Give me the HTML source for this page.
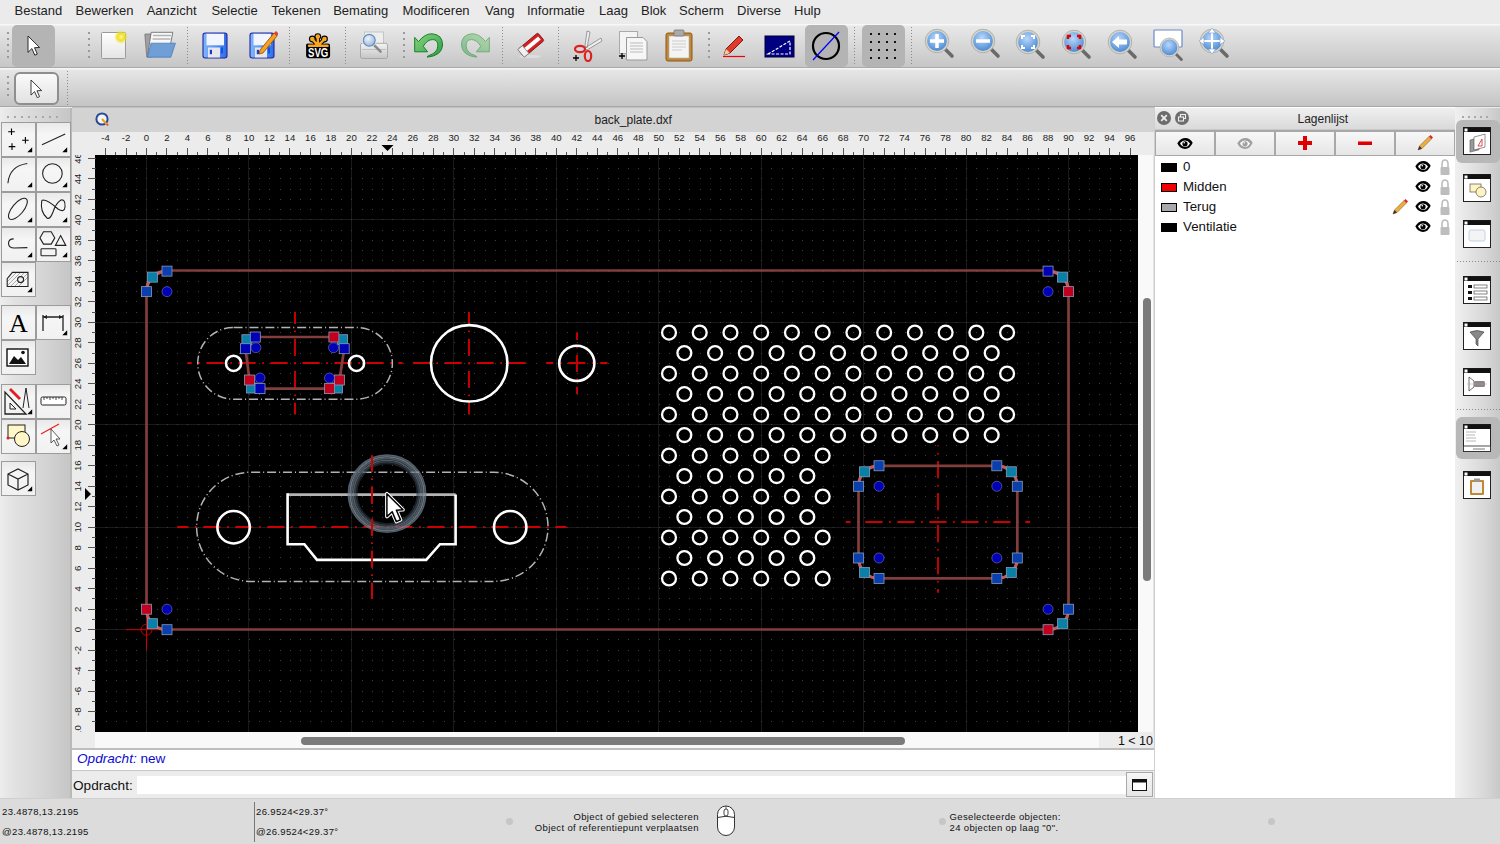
<!DOCTYPE html><html><head><meta charset="utf-8"><style>

*{box-sizing:border-box}
html,body{margin:0;padding:0}
body{width:1500px;height:844px;overflow:hidden;position:relative;background:#ececec;font-family:"Liberation Sans",sans-serif;color:#111}
.a{position:absolute}
.t{position:absolute;white-space:nowrap;line-height:1}
.menu{font-size:13px;color:#222}
.tb{position:absolute;left:0;width:1500px}
.hdl{position:absolute;width:2px;background:repeating-linear-gradient(#9a9a9a 0 2px,transparent 2px 6px)}
.sep{position:absolute;width:1px;background:repeating-linear-gradient(#8a8a8a 0 1px,transparent 1px 3px)}
.sel{position:absolute;background:#b4b4b4;border-radius:5px}
.btn{position:absolute;border:1px solid #a6a6a6;background:linear-gradient(#fafafa,#e6e6e6)}
.lb{position:absolute;top:130px;height:26px;border:1px solid #a8a8a8;border-top:2px solid #a8a8a8;background:linear-gradient(#f6f6f6,#e4e4e4)}

</style></head><body>
<div class="a" style="left:0;top:0;width:1500px;height:24px;background:#ebebeb"></div>
<div class="t menu" style="left:14.6px;top:4px">Bestand</div>
<div class="t menu" style="left:75.6px;top:4px">Bewerken</div>
<div class="t menu" style="left:146.7px;top:4px">Aanzicht</div>
<div class="t menu" style="left:211.4px;top:4px">Selectie</div>
<div class="t menu" style="left:271.6px;top:4px">Tekenen</div>
<div class="t menu" style="left:333.2px;top:4px">Bemating</div>
<div class="t menu" style="left:402.4px;top:4px">Modificeren</div>
<div class="t menu" style="left:485px;top:4px">Vang</div>
<div class="t menu" style="left:527px;top:4px">Informatie</div>
<div class="t menu" style="left:599px;top:4px">Laag</div>
<div class="t menu" style="left:641px;top:4px">Blok</div>
<div class="t menu" style="left:679px;top:4px">Scherm</div>
<div class="t menu" style="left:737px;top:4px">Diverse</div>
<div class="t menu" style="left:794px;top:4px">Hulp</div>
<div class="tb" style="top:24px;height:44px;background:linear-gradient(#f7f7f7 0,#f7f7f7 1px,#e8e8e8 2px,#c6c6c6 100%);border-bottom:1px solid #a9a9a9"></div>
<div class="tb" style="top:68px;height:39px;background:linear-gradient(#f6f6f6 0,#f6f6f6 1px,#e6e6e6 2px,#c4c4c4 100%);border-bottom:1px solid #a8a8a8"></div>
<div class="sel" style="left:12px;top:25px;width:43px;height:42px"></div>
<svg class="a" style="left:27px;top:35px" width="14" height="22" viewBox="0 0 14 22"><g transform="translate(1,1)"><path d="M0 0 L0 16.4 L3.9 12.6 L6.8 19.2 L9.3 18.1 L6.5 11.7 L11.6 11.5 Z" fill="#fff" stroke="#222" stroke-width=".95" stroke-linejoin="round"/></g></svg>
<div class="hdl" style="left:7px;top:32px;height:28px"></div>
<div class="hdl" style="left:88px;top:32px;height:28px"></div>
<svg class="a" style="left:100px;top:30px" width="28" height="31" viewBox="0 0 28 31"><defs><radialGradient id="gy"><stop offset="0" stop-color="#fff7a0"/><stop offset=".5" stop-color="#f0e020"/><stop offset="1" stop-color="#f0e020" stop-opacity="0"/></radialGradient><linearGradient id="pg" x1="0" x2="0" y1="0" y2="1"><stop offset="0" stop-color="#fff"/><stop offset="1" stop-color="#e4e4e4"/></linearGradient></defs><rect x="1.5" y="2.5" width="24" height="26" rx="1" fill="url(#pg)" stroke="#9a9a9a"/><circle cx="21" cy="7" r="7" fill="url(#gy)"/></svg>
<svg class="a" style="left:144px;top:31px" width="34" height="30" viewBox="0 0 34 30"><path d="M0.8 3.5 Q0.8 3 1.5 3 H8 V26 H2.8 Z" fill="#a0a0a0" stroke="#6a6a6a" stroke-width=".7"/><path d="M7.2 1.3 H28.8 L26.6 13 L3.8 23 Z" fill="#f8f8f8" stroke="#6e6e6e" stroke-width=".9"/><path d="M9 4.5 H27 M8.5 8 H26.5" stroke="#b4b4b4" stroke-width="1.6"/><path d="M7 12.2 H31.4 L26.8 26.2 H3.3 Z" fill="#6f9fd6" stroke="#4a7ab8" stroke-width=".8"/></svg>
<div class="sep" style="left:187px;top:27px;height:38px"></div>
<svg class="a" style="left:202px;top:32px" width="27" height="28" viewBox="0 0 27 28"><defs><linearGradient id="flg"><stop offset="0" stop-color="#7fb6fb"/><stop offset=".6" stop-color="#4f8ef4"/><stop offset="1" stop-color="#2e6ee8"/></linearGradient></defs><rect x="1" y="1" width="24" height="25" rx="2.2" fill="url(#flg)" stroke="#2424a0" stroke-width="1.1"/><rect x="4.5" y="1.8" width="17.5" height="11.5" fill="#f2f5fe"/><rect x="6" y="15.5" width="12" height="10" fill="#e6e6ec"/><rect x="7.8" y="17.8" width="2.2" height="4.4" fill="#1a3ad0"/><rect x="19" y="15.5" width="2" height="6" fill="#1a50e0"/></svg>
<svg class="a" style="left:248px;top:29px" width="30" height="31" viewBox="0 0 30 31"><g transform="translate(1,3)"><defs><linearGradient id="flg"><stop offset="0" stop-color="#7fb6fb"/><stop offset=".6" stop-color="#4f8ef4"/><stop offset="1" stop-color="#2e6ee8"/></linearGradient></defs><rect x="1" y="1" width="24" height="25" rx="2.2" fill="url(#flg)" stroke="#2424a0" stroke-width="1.1"/><rect x="4.5" y="1.8" width="17.5" height="11.5" fill="#f2f5fe"/><rect x="6" y="15.5" width="12" height="10" fill="#e6e6ec"/><rect x="7.8" y="17.8" width="2.2" height="4.4" fill="#1a3ad0"/><rect x="19" y="15.5" width="2" height="6" fill="#1a50e0"/></g><path d="M12 21 L26 4 L29 7 L15 24 L11 25 Z" fill="#f4a020" stroke="#8a4a00" stroke-width=".8"/><path d="M26 4 L28 2 L31 5 L29 7Z" fill="#e04040"/></svg>
<div class="sep" style="left:289px;top:27px;height:38px"></div>
<svg class="a" style="left:300px;top:28px" width="36" height="34" viewBox="0 0 36 34"><g stroke="#000" stroke-width="4.2" stroke-linecap="round"><path d="M18 18 L12.3 11 M18 18 L17.8 8.6 M18 18 L24.5 11 M18 18 L8 17.5 M18 18 L28 17.5"/></g><circle cx="12.3" cy="11" r="3.4" fill="#000"/><circle cx="17.8" cy="8.6" r="3.4" fill="#000"/><circle cx="24.5" cy="11" r="3.4" fill="#000"/><rect x="6.1" y="16.5" width="24" height="13.8" rx="3" fill="#000"/><g stroke="#f5a623" stroke-width="2.5" stroke-linecap="round"><path d="M18 17.8 L12.3 11 M18 17.8 L17.8 8.6 M18 17.8 L24.5 11 M9 17.8 H27.5"/></g><circle cx="12.3" cy="11" r="2.3" fill="#f5a623"/><circle cx="17.8" cy="8.6" r="2.3" fill="#f5a623"/><circle cx="24.5" cy="11" r="2.3" fill="#f5a623"/><text x="18.2" y="29" text-anchor="middle" font-family="Liberation Sans" font-weight="bold" font-size="13" fill="#fff" transform="translate(18.2 0) scale(.74 1) translate(-18.2 0)">SVG</text></svg>
<div class="sep" style="left:345px;top:27px;height:38px"></div>
<svg class="a" style="left:356px;top:28px" width="36" height="34" viewBox="0 0 36 34"><defs><linearGradient id="prg" x1="0" x2="0" y1="0" y2="1"><stop offset="0" stop-color="#f4f4f4"/><stop offset="1" stop-color="#c4c4c4"/></linearGradient><radialGradient id="lens" cx=".4" cy=".35" r=".7"><stop offset="0" stop-color="#eef4fa"/><stop offset="1" stop-color="#98b4d4"/></radialGradient></defs><rect x="8.4" y="4" width="19" height="14" fill="#eeeeee" stroke="#bcbcbc" stroke-width=".8"/><path d="M4.5 17 Q4.5 15.3 6.5 15.3 H29.5 Q31.5 15.3 31.5 17 V29 Q31.5 30.5 29.5 30.5 H6.5 Q4.5 30.5 4.5 29Z" fill="url(#prg)" stroke="#a4a4a4" stroke-width=".9"/><path d="M6 21.5 H30" stroke="#b8b8b8" stroke-width=".8"/><path d="M18 17 L24.6 23.6" stroke="#8a8a8a" stroke-width="2.6" stroke-linecap="round"/><circle cx="13.3" cy="12.3" r="6" fill="url(#lens)" stroke="#5f8cc8" stroke-width="1.3"/><circle cx="13.3" cy="12.3" r="7" fill="none" stroke="#e8e8e8" stroke-width=".8"/></svg>
<div class="hdl" style="left:403px;top:32px;height:28px"></div>
<svg class="a" style="left:408px;top:28px" width="40" height="36" viewBox="0 0 40 36"><defs><linearGradient id="ug" x1="0" y1="0" x2="1" y2="1"><stop offset="0" stop-color="#8ad47a"/><stop offset="1" stop-color="#2a9c46"/></linearGradient></defs><path d="M6.7 9.4 L10.5 13.6 Q17 5.5 24 5.8 Q34.5 6.5 34.6 17 Q34 27.5 19.4 29.2 Q19 28 20.5 27.7 Q29.5 25 29.9 18 Q30 11.5 24.6 11.6 Q19.5 11.5 15.2 18.3 L19.6 23.8 L6.7 23.8 Z" fill="url(#ug)" stroke="#15802e" stroke-width="1"/></svg>
<svg class="a" style="left:456px;top:28px" width="40" height="36" viewBox="0 0 40 36"><g opacity=".5" transform="translate(40,0) scale(-1,1)"><path d="M6.7 9.4 L10.5 13.6 Q17 5.5 24 5.8 Q34.5 6.5 34.6 17 Q34 27.5 19.4 29.2 Q19 28 20.5 27.7 Q29.5 25 29.9 18 Q30 11.5 24.6 11.6 Q19.5 11.5 15.2 18.3 L19.6 23.8 L6.7 23.8 Z" fill="url(#ug)" stroke="#15802e" stroke-width="1"/></g></svg>
<div class="sep" style="left:502px;top:27px;height:38px"></div>
<svg class="a" style="left:517px;top:31px" width="28" height="29" viewBox="0 0 28 29"><ellipse cx="13" cy="25.5" rx="11" ry="1.6" fill="#ddd"/><g transform="rotate(-40 14 14)"><rect x="1" y="9" width="26" height="10" rx="1.5" fill="#d42020" stroke="#7a1010" stroke-width=".8"/><rect x="5" y="12" width="20" height="4" fill="#fff"/><rect x="1" y="9" width="6" height="10" fill="#f0f0f0" stroke="#888" stroke-width=".8"/></g></svg>
<div class="sep" style="left:558px;top:27px;height:38px"></div>
<svg class="a" style="left:571px;top:30px" width="32" height="32" viewBox="0 0 32 32"><path d="M14 16 L16 1 L19 2 L16 18Z M14 18 L30 8 L31 11 L16 20 Z" fill="#eee" stroke="#888" stroke-width=".8"/><ellipse cx="9" cy="19" rx="5" ry="3.2" fill="none" stroke="#e02020" stroke-width="2.2"/><ellipse cx="17" cy="26" rx="3.2" ry="5" fill="none" stroke="#e02020" stroke-width="2.2"/><path d="M2 28 h6 M5 25 v6" stroke="#000" stroke-width="1.3"/></svg>
<svg class="a" style="left:617px;top:30px" width="32" height="32" viewBox="0 0 32 32"><rect x="2.5" y="1.5" width="18" height="22" fill="#f4f4f4" stroke="#aaa"/><path d="M9.5 7.5 H26 L30 11.5 V30 H9.5 Z" fill="#f6f6f6" stroke="#999"/><g stroke="#bbb"><path d="M13 13h13M13 16h13M13 19h13M13 22h13"/></g><path d="M2 26 h6 M5 23 v6" stroke="#000" stroke-width="1.3"/></svg>
<svg class="a" style="left:664px;top:29px" width="30" height="33" viewBox="0 0 30 33"><rect x="2" y="4" width="26" height="28" rx="2" fill="#c08838" stroke="#8a5a18"/><rect x="5" y="7" width="20" height="22" fill="#f4f4f4" stroke="#aaa" stroke-width=".6"/><rect x="10" y="1" width="10" height="6" rx="1" fill="#aaa" stroke="#777" stroke-width=".8"/><g stroke="#ccc"><path d="M8 12h14M8 15h14M8 18h14M8 21h10"/></g></svg>
<div class="hdl" style="left:708px;top:32px;height:28px"></div>
<svg class="a" style="left:722px;top:34px" width="24" height="24" viewBox="0 0 24 24"><path d="M2 21 L4 15 L17 2 L21 6 L8 19 Z" fill="#e03a2a" stroke="#801810" stroke-width="1"/><path d="M2 21 L4 15 L8 19Z" fill="#f0d0a0"/><path d="M1 22.5 h22" stroke="#f00000" stroke-width="1.2"/></svg>
<svg class="a" style="left:764px;top:35px" width="31" height="23" viewBox="0 0 31 23"><rect x="1" y="1" width="29" height="21" fill="#000080" stroke="#000030"/><path d="M4 19 L26 6 L26 19 Z" fill="none" stroke="#fff" stroke-width="1.2" stroke-dasharray="3 1.5"/></svg>
<div class="sel" style="left:805px;top:25px;width:43px;height:42px"></div>
<svg class="a" style="left:809px;top:29px" width="34" height="34" viewBox="0 0 34 34"><circle cx="17" cy="17" r="13" fill="none" stroke="#000" stroke-width="2.2"/><path d="M4 31 L30 3" stroke="#0000ff" stroke-width="1.2"/></svg>
<div class="sep" style="left:854px;top:27px;height:38px"></div>
<div class="sel" style="left:862px;top:25px;width:43px;height:42px"></div>
<svg class="a" style="left:868px;top:32px" width="30" height="30" viewBox="0 0 30 30"><rect x="2" y="1" width="2" height="2" fill="#111"/><rect x="2" y="9" width="2" height="2" fill="#111"/><rect x="2" y="17" width="2" height="2" fill="#111"/><rect x="2" y="25" width="2" height="2" fill="#111"/><rect x="10" y="1" width="2" height="2" fill="#111"/><rect x="10" y="9" width="2" height="2" fill="#111"/><rect x="10" y="17" width="2" height="2" fill="#111"/><rect x="10" y="25" width="2" height="2" fill="#111"/><rect x="18" y="1" width="2" height="2" fill="#111"/><rect x="18" y="9" width="2" height="2" fill="#111"/><rect x="18" y="17" width="2" height="2" fill="#111"/><rect x="18" y="25" width="2" height="2" fill="#111"/><rect x="26" y="1" width="2" height="2" fill="#111"/><rect x="26" y="9" width="2" height="2" fill="#111"/><rect x="26" y="17" width="2" height="2" fill="#111"/><rect x="26" y="25" width="2" height="2" fill="#111"/></svg>
<div class="sep" style="left:911px;top:27px;height:38px"></div>
<svg class="a" style="left:924px;top:28px" width="32" height="32" viewBox="0 0 32 32"><defs><radialGradient id="mg" cx=".45" cy=".35" r=".7"><stop offset="0" stop-color="#b8d8fa"/><stop offset="1" stop-color="#3f7fcf"/></radialGradient></defs><path d="M21.5 21.5 L28 28" stroke="#6a6a6a" stroke-width="3.6" stroke-linecap="round"/><circle cx="13" cy="13" r="10.9" fill="url(#mg)" stroke="#d4d4cc" stroke-width="2"/><circle cx="13" cy="13" r="11.8" fill="none" stroke="#9a9a90" stroke-width=".6"/><path d="M13 6v14M6 13h14" stroke="#fff" stroke-width="3.5"/></svg>
<svg class="a" style="left:970px;top:28px" width="32" height="32" viewBox="0 0 32 32"><defs><radialGradient id="mg" cx=".45" cy=".35" r=".7"><stop offset="0" stop-color="#b8d8fa"/><stop offset="1" stop-color="#3f7fcf"/></radialGradient></defs><path d="M21.5 21.5 L28 28" stroke="#6a6a6a" stroke-width="3.6" stroke-linecap="round"/><circle cx="13" cy="13" r="10.9" fill="url(#mg)" stroke="#d4d4cc" stroke-width="2"/><circle cx="13" cy="13" r="11.8" fill="none" stroke="#9a9a90" stroke-width=".6"/><path d="M6 13h14" stroke="#fff" stroke-width="3.5"/></svg>
<svg class="a" style="left:1015px;top:29px" width="32" height="32" viewBox="0 0 32 32"><defs><radialGradient id="mg" cx=".45" cy=".35" r=".7"><stop offset="0" stop-color="#b8d8fa"/><stop offset="1" stop-color="#3f7fcf"/></radialGradient></defs><path d="M21.5 21.5 L28 28" stroke="#6a6a6a" stroke-width="3.6" stroke-linecap="round"/><circle cx="13" cy="13" r="10.9" fill="url(#mg)" stroke="#d4d4cc" stroke-width="2"/><circle cx="13" cy="13" r="11.8" fill="none" stroke="#9a9a90" stroke-width=".6"/><path d="M7 10V7h3M16 7h3v3M19 16v3h-3M10 19H7v-3" fill="none" stroke="#fff" stroke-width="2"/></svg>
<svg class="a" style="left:1061px;top:29px" width="32" height="32" viewBox="0 0 32 32"><defs><radialGradient id="mg" cx=".45" cy=".35" r=".7"><stop offset="0" stop-color="#b8d8fa"/><stop offset="1" stop-color="#3f7fcf"/></radialGradient></defs><path d="M21.5 21.5 L28 28" stroke="#6a6a6a" stroke-width="3.6" stroke-linecap="round"/><circle cx="13" cy="13" r="10.9" fill="url(#mg)" stroke="#d4d4cc" stroke-width="2"/><circle cx="13" cy="13" r="11.8" fill="none" stroke="#9a9a90" stroke-width=".6"/><path d="M7 10V7h3M16 7h3v3M19 16v3h-3M10 19H7v-3" fill="none" stroke="#e00000" stroke-width="2.5"/></svg>
<svg class="a" style="left:1107px;top:29px" width="32" height="32" viewBox="0 0 32 32"><defs><radialGradient id="mg" cx=".45" cy=".35" r=".7"><stop offset="0" stop-color="#b8d8fa"/><stop offset="1" stop-color="#3f7fcf"/></radialGradient></defs><path d="M21.5 21.5 L28 28" stroke="#6a6a6a" stroke-width="3.6" stroke-linecap="round"/><circle cx="13" cy="13" r="10.9" fill="url(#mg)" stroke="#d4d4cc" stroke-width="2"/><circle cx="13" cy="13" r="11.8" fill="none" stroke="#9a9a90" stroke-width=".6"/><path d="M5 13 L12 7 V10.5 H20 V15.5 H12 V19 Z" fill="#fff"/></svg>
<svg class="a" style="left:1153px;top:29px" width="32" height="33" viewBox="0 0 32 33"><rect x="1" y="1" width="28" height="17" rx="1" fill="#fff" stroke="#6a8ac8" stroke-width="1.2"/><g transform="translate(6,8) scale(.8)"><defs><radialGradient id="mg2" cx=".45" cy=".35" r=".7"><stop offset="0" stop-color="#b8d8fa"/><stop offset="1" stop-color="#3f7fcf"/></radialGradient></defs><path d="M21.5 21.5 L28 28" stroke="#6a6a6a" stroke-width="3.6" stroke-linecap="round"/><circle cx="13" cy="13" r="10.9" fill="url(#mg2)" stroke="#d4d4cc" stroke-width="2"/><circle cx="13" cy="13" r="11.8" fill="none" stroke="#9a9a90" stroke-width=".6"/></g></svg>
<svg class="a" style="left:1199px;top:28px" width="33" height="33" viewBox="0 0 33 33"><defs><radialGradient id="mg" cx=".45" cy=".35" r=".7"><stop offset="0" stop-color="#b8d8fa"/><stop offset="1" stop-color="#3f7fcf"/></radialGradient></defs><path d="M21.5 21.5 L28 28" stroke="#6a6a6a" stroke-width="3.6" stroke-linecap="round"/><circle cx="13" cy="13" r="10.9" fill="url(#mg)" stroke="#d4d4cc" stroke-width="2"/><circle cx="13" cy="13" r="11.8" fill="none" stroke="#9a9a90" stroke-width=".6"/><path d="M13 1 V25 M1 13 H25" stroke="#fff" stroke-width="2"/><path d="M13 0 L9.5 5 H16.5Z M13 26 L9.5 21 H16.5Z M0 13 L5 9.5 V16.5Z M26 13 L21 9.5 V16.5Z" fill="#fff" stroke="#7aa0d8" stroke-width=".6"/></svg>
<div class="hdl" style="left:7px;top:76px;height:22px"></div>
<div class="a" style="left:14px;top:72px;width:45px;height:33px;border:2px solid #8e8e8e;border-radius:6px;background:linear-gradient(#fafafa,#e2e2e2)"></div>
<svg class="a" style="left:30px;top:79px" width="14" height="22" viewBox="0 0 14 22"><g transform="translate(1,1) scale(.92)"><path d="M0 0 L0 16.4 L3.9 12.6 L6.8 19.2 L9.3 18.1 L6.5 11.7 L11.6 11.5 Z" fill="#fff" stroke="#222" stroke-width=".95" stroke-linejoin="round"/></g></svg>
<div class="sep" style="left:67px;top:71px;height:34px"></div>
<div class="a" style="left:0;top:108px;width:72px;height:690px;background:linear-gradient(90deg,#ededed 0,#e2e2e2 20%,#d2d2d2 70%,#c6c6c6 100%);border-right:2px solid #b9b9b9"></div>
<div class="a" style="left:7px;top:116px;width:56px;height:2px;background:repeating-linear-gradient(90deg,#a8a8a8 0 2px,transparent 2px 7px)"></div>
<div class="btn" style="left:1px;top:122px;width:35px;height:35px;border:1.4px solid #9c9c9c;background:linear-gradient(#e9e9e9 0,#f6f6f6 35%,#f1f1f1 100%)"></div><svg class="a" style="left:1px;top:122px" width="35" height="35" viewBox="0 0 35 35"><path d="M7.2 9.8h6.6M10.5 6.5v6.6M21.1 18.3h6.6M24.4 15v6.6M7.7 24.6h6.6M11 21.3v6.6" stroke="#000" stroke-width="1.1"/><path d="M31.2 25.3 L31.2 30.2 L26.3 30.2Z" fill="#000"/></svg>
<div class="btn" style="left:36px;top:122px;width:35px;height:35px;border:1.4px solid #9c9c9c;background:linear-gradient(#e9e9e9 0,#f6f6f6 35%,#f1f1f1 100%)"></div><svg class="a" style="left:36px;top:122px" width="35" height="35" viewBox="0 0 35 35"><path d="M6 22.8 L29.2 11.9" stroke="#222" fill="none" stroke-width="1.1"/><path d="M31.2 25.3 L31.2 30.2 L26.3 30.2Z" fill="#000"/></svg>
<div class="btn" style="left:1px;top:157px;width:35px;height:35px;border:1.4px solid #9c9c9c;background:linear-gradient(#e9e9e9 0,#f6f6f6 35%,#f1f1f1 100%)"></div><svg class="a" style="left:1px;top:157px" width="35" height="35" viewBox="0 0 35 35"><path d="M6.9 26.2 Q8.5 9 26.3 6.5" stroke="#222" fill="none" stroke-width="1.1"/><path d="M31.2 25.3 L31.2 30.2 L26.3 30.2Z" fill="#000"/></svg>
<div class="btn" style="left:36px;top:157px;width:35px;height:35px;border:1.4px solid #9c9c9c;background:linear-gradient(#e9e9e9 0,#f6f6f6 35%,#f1f1f1 100%)"></div><svg class="a" style="left:36px;top:157px" width="35" height="35" viewBox="0 0 35 35"><circle cx="16.4" cy="16.5" r="9.8" stroke="#222" fill="none" stroke-width="1.1"/><path d="M31.2 25.3 L31.2 30.2 L26.3 30.2Z" fill="#000"/></svg>
<div class="btn" style="left:1px;top:192px;width:35px;height:35px;border:1.4px solid #9c9c9c;background:linear-gradient(#e9e9e9 0,#f6f6f6 35%,#f1f1f1 100%)"></div><svg class="a" style="left:1px;top:192px" width="35" height="35" viewBox="0 0 35 35"><ellipse cx="16.9" cy="16.9" rx="13" ry="5.6" transform="rotate(-50 16.9 16.9)" stroke="#222" fill="none" stroke-width="1.1"/><path d="M31.2 25.3 L31.2 30.2 L26.3 30.2Z" fill="#000"/></svg>
<div class="btn" style="left:36px;top:192px;width:35px;height:35px;border:1.4px solid #9c9c9c;background:linear-gradient(#e9e9e9 0,#f6f6f6 35%,#f1f1f1 100%)"></div><svg class="a" style="left:36px;top:192px" width="35" height="35" viewBox="0 0 35 35"><path d="M5.7 9 Q4 20 11 26 Q14 28 17 20 Q20 11 25 8 Q29.5 7 29 15 Q28.5 21 22 17 Q12 8 7 8 Q5.8 8.2 5.7 9Z" stroke="#222" fill="none" stroke-width="1.1"/><path d="M31.2 25.3 L31.2 30.2 L26.3 30.2Z" fill="#000"/></svg>
<div class="btn" style="left:1px;top:227px;width:35px;height:35px;border:1.4px solid #9c9c9c;background:linear-gradient(#e9e9e9 0,#f6f6f6 35%,#f1f1f1 100%)"></div><svg class="a" style="left:1px;top:227px" width="35" height="35" viewBox="0 0 35 35"><path d="M12.7 11.9 Q7.5 12 7.5 16.5 Q7.8 21 13.3 21 L26.4 20.6" stroke="#222" fill="none" stroke-width="1.1"/><path d="M31.2 25.3 L31.2 30.2 L26.3 30.2Z" fill="#000"/></svg>
<div class="btn" style="left:36px;top:227px;width:35px;height:35px;border:1.4px solid #9c9c9c;background:linear-gradient(#e9e9e9 0,#f6f6f6 35%,#f1f1f1 100%)"></div><svg class="a" style="left:36px;top:227px" width="35" height="35" viewBox="0 0 35 35"><path d="M7.5 4.7 H15.2 L18.8 10.9 L15.2 17.1 H7.5 L3.9 10.9Z" stroke="#222" fill="none" stroke-width="1.1"/><path d="M24.6 8.6 L29.8 18.4 H19.4Z" stroke="#222" fill="none" stroke-width="1.1"/><rect x="5" y="21.7" width="15" height="7.1" rx=".8" stroke="#222" fill="none" stroke-width="1.1"/><path d="M31.2 25.3 L31.2 30.2 L26.3 30.2Z" fill="#000"/></svg>
<div class="btn" style="left:1px;top:262px;width:35px;height:35px;border:1.4px solid #9c9c9c;background:linear-gradient(#e9e9e9 0,#f6f6f6 35%,#f1f1f1 100%)"></div><svg class="a" style="left:1px;top:262px" width="35" height="35" viewBox="0 0 35 35"><defs><clipPath id="hc"><path d="M11.4 10.4 H27 V24.5 H6.2 V16.7Z"/></clipPath></defs><g clip-path="url(#hc)" stroke="#777" stroke-width=".6"><path d="M0 30 L24 6 M4 30 L28 6 M8 30 L32 6 M12 30 L36 6 M-4 30 L20 6 M-8 30 L16 6"/></g><path d="M11.4 10.4 H27 V24.5 H6.2 V16.7Z" stroke="#222" fill="none" stroke-width="1.1"/><circle cx="19.6" cy="17.6" r="3" fill="#f2f2f2" stroke="#222" stroke-width="1.1"/><path d="M31.2 25.3 L31.2 30.2 L26.3 30.2Z" fill="#000"/></svg>
<div class="btn" style="left:1px;top:305px;width:35px;height:35px;border:1.4px solid #9c9c9c;background:linear-gradient(#e9e9e9 0,#f6f6f6 35%,#f1f1f1 100%)"></div><svg class="a" style="left:1px;top:305px" width="35" height="35" viewBox="0 0 35 35"><text x="17.5" y="27" text-anchor="middle" font-family="Liberation Serif" font-size="26" fill="#000">A</text></svg>
<div class="btn" style="left:36px;top:305px;width:35px;height:35px;border:1.4px solid #9c9c9c;background:linear-gradient(#e9e9e9 0,#f6f6f6 35%,#f1f1f1 100%)"></div><svg class="a" style="left:36px;top:305px" width="35" height="35" viewBox="0 0 35 35"><path d="M7 10 V26 M27 10 V26 M7 12 H27" stroke="#222" stroke-width="1.3"/><path d="M7 12 L11 10 V14Z M27 12 L23 10 V14Z" fill="#222"/><path d="M31.2 25.3 L31.2 30.2 L26.3 30.2Z" fill="#000"/></svg>
<div class="btn" style="left:1px;top:340px;width:35px;height:35px;border:1.4px solid #9c9c9c;background:linear-gradient(#e9e9e9 0,#f6f6f6 35%,#f1f1f1 100%)"></div><svg class="a" style="left:1px;top:340px" width="35" height="35" viewBox="0 0 35 35"><rect x="6" y="9" width="21" height="17" fill="#fff" stroke="#111" stroke-width="1.4"/><path d="M8 24 L13 16 L17 20 L20 17 L25 24Z" fill="#111"/><circle cx="22" cy="12.5" r="1.8" fill="#111"/></svg>
<div class="btn" style="left:1px;top:384px;width:35px;height:35px;border:1.4px solid #9c9c9c;background:linear-gradient(#e9e9e9 0,#f6f6f6 35%,#f1f1f1 100%)"></div><svg class="a" style="left:1px;top:384px" width="35" height="35" viewBox="0 0 35 35"><path d="M4 30 L4 8 L25 30Z" fill="none" stroke="#222" stroke-width="1.3"/><path d="M9 25 L9 19 L15 25Z" fill="none" stroke="#222" stroke-width="1"/><path d="M10 4 L20 14 L18 16 L8 6Z" fill="#e02020"/><path d="M25 4 L22 24 M25 4 L28 24" stroke="#222" stroke-width="1"/><path d="M31.2 25.3 L31.2 30.2 L26.3 30.2Z" fill="#000"/></svg>
<div class="btn" style="left:36px;top:384px;width:35px;height:35px;border:1.4px solid #9c9c9c;background:linear-gradient(#e9e9e9 0,#f6f6f6 35%,#f1f1f1 100%)"></div><svg class="a" style="left:36px;top:384px" width="35" height="35" viewBox="0 0 35 35"><rect x="5" y="13" width="25" height="8" rx="1.5" fill="#fff" stroke="#222" stroke-width="1"/><path d="M8 13v3M11 13v2M14 13v3M17 13v2M20 13v3M23 13v2M26 13v3" stroke="#222" stroke-width=".8"/></svg>
<div class="btn" style="left:1px;top:419px;width:35px;height:35px;border:1.4px solid #9c9c9c;background:linear-gradient(#e9e9e9 0,#f6f6f6 35%,#f1f1f1 100%)"></div><svg class="a" style="left:1px;top:419px" width="35" height="35" viewBox="0 0 35 35"><rect x="7" y="6" width="17" height="13" fill="#fff7c8" stroke="#222" stroke-width="1"/><circle cx="21" cy="20" r="7.5" fill="#fff7c8" stroke="#222" stroke-width="1"/><circle cx="7" cy="19" r="1.5" fill="#e02020"/></svg>
<div class="btn" style="left:36px;top:419px;width:35px;height:35px;border:1.4px solid #9c9c9c;background:linear-gradient(#e9e9e9 0,#f6f6f6 35%,#f1f1f1 100%)"></div><svg class="a" style="left:36px;top:419px" width="35" height="35" viewBox="0 0 35 35"><path d="M5 15 L23 5" stroke="#f02020" stroke-width="1.3"/><path d="M15 10 L15 24 L18 21 L21 27 L23 26 L20 20 L24 20Z" fill="#fff" stroke="#333" stroke-width=".8"/><path d="M31.2 25.3 L31.2 30.2 L26.3 30.2Z" fill="#000"/></svg>
<div class="btn" style="left:1px;top:461px;width:35px;height:35px;border:1.4px solid #9c9c9c;background:linear-gradient(#e9e9e9 0,#f6f6f6 35%,#f1f1f1 100%)"></div><svg class="a" style="left:1px;top:461px" width="35" height="35" viewBox="0 0 35 35"><path d="M7 13 L17 8 L27 13 L27 24 L17 29 L7 24Z M7 13 L17 18 L27 13 M17 18 V29" fill="none" stroke="#222" stroke-width="1.2"/><path d="M31.2 25.3 L31.2 30.2 L26.3 30.2Z" fill="#000"/></svg>
<div class="a" style="left:72px;top:107px;width:1083px;height:1px;background:#c0c0c0"></div>
<div class="a" style="left:72px;top:108px;width:1082px;height:24px;background:#d3d3d3"></div>
<svg class="a" style="left:95px;top:112px" width="14" height="14" viewBox="0 0 14 14"><circle cx="7" cy="7" r="5.6" fill="#f4f4f4" stroke="#2a4a98" stroke-width="2"/><path d="M7 7 L12 12.5" stroke="#e8a020" stroke-width="2"/><circle cx="12.5" cy="12.8" r="1" fill="#e04040"/></svg>
<div class="t" style="left:594.5px;top:114px;font-size:12px;color:#222">back_plate.dxf</div>
<div class="a" style="left:72px;top:132px;width:1082px;height:23px;background:#ececec"></div>
<div class="a" style="left:72px;top:155px;width:23px;height:593px;background:#ececec"></div>
<svg class="a" style="left:0;top:0" width="1500" height="844"><path d="M105.5 148v7M115.5 152v3M126.5 148v7M136.5 152v3M146.5 148v7M156.5 152v3M166.5 148v7M177.5 152v3M187.5 148v7M197.5 152v3M207.5 148v7M218.5 152v3M228.5 148v7M238.5 152v3M248.5 148v7M259.5 152v3M269.5 148v7M279.5 152v3M289.5 148v7M300.5 152v3M310.5 148v7M320.5 152v3M330.5 148v7M341.5 152v3M351.5 148v7M361.5 152v3M371.5 148v7M382.5 152v3M392.5 148v7M402.5 152v3M412.5 148v7M423.5 152v3M433.5 148v7M443.5 152v3M453.5 148v7M464.5 152v3M474.5 148v7M484.5 152v3M494.5 148v7M505.5 152v3M515.5 148v7M525.5 152v3M535.5 148v7M546.5 152v3M556.5 148v7M566.5 152v3M576.5 148v7M587.5 152v3M597.5 148v7M607.5 152v3M617.5 148v7M628.5 152v3M638.5 148v7M648.5 152v3M658.5 148v7M668.5 152v3M679.5 148v7M689.5 152v3M699.5 148v7M709.5 152v3M720.5 148v7M730.5 152v3M740.5 148v7M750.5 152v3M761.5 148v7M771.5 152v3M781.5 148v7M791.5 152v3M802.5 148v7M812.5 152v3M822.5 148v7M832.5 152v3M843.5 148v7M853.5 152v3M863.5 148v7M873.5 152v3M884.5 148v7M894.5 152v3M904.5 148v7M914.5 152v3M925.5 148v7M935.5 152v3M945.5 148v7M955.5 152v3M966.5 148v7M976.5 152v3M986.5 148v7M996.5 152v3M1007.5 148v7M1017.5 152v3M1027.5 148v7M1037.5 152v3M1048.5 148v7M1058.5 152v3M1068.5 148v7M1078.5 152v3M1089.5 148v7M1099.5 152v3M1109.5 148v7M1119.5 152v3M1130.5 148v7M92 721.5h3M88 711.5h7M92 701.5h3M88 691.5h7M92 680.5h3M88 670.5h7M92 660.5h3M88 650.5h7M92 639.5h3M88 629.5h7M92 619.5h3M88 609.5h7M92 598.5h3M88 588.5h7M92 578.5h3M88 568.5h7M92 557.5h3M88 547.5h7M92 537.5h3M88 527.5h7M92 517.5h3M88 506.5h7M92 496.5h3M88 486.5h7M92 476.5h3M88 465.5h7M92 455.5h3M88 445.5h7M92 435.5h3M88 424.5h7M92 414.5h3M88 404.5h7M92 394.5h3M88 383.5h7M92 373.5h3M88 363.5h7M92 353.5h3M88 342.5h7M92 332.5h3M88 322.5h7M92 312.5h3M88 301.5h7M92 291.5h3M88 281.5h7M92 271.5h3M88 260.5h7M92 250.5h3M88 240.5h7M92 230.5h3M88 219.5h7M92 209.5h3M88 199.5h7M92 189.5h3M88 178.5h7M92 168.5h3M88 158.5h7" stroke="#555" stroke-width="1"/>
<g font-family="Liberation Sans" font-size="9.6" fill="#222"><text x="105.52" y="141" text-anchor="middle">-4</text><text x="126.01" y="141" text-anchor="middle">-2</text><text x="146.5" y="141" text-anchor="middle">0</text><text x="166.99" y="141" text-anchor="middle">2</text><text x="187.48" y="141" text-anchor="middle">4</text><text x="207.97" y="141" text-anchor="middle">6</text><text x="228.46" y="141" text-anchor="middle">8</text><text x="248.95" y="141" text-anchor="middle">10</text><text x="269.44" y="141" text-anchor="middle">12</text><text x="289.93" y="141" text-anchor="middle">14</text><text x="310.42" y="141" text-anchor="middle">16</text><text x="330.91" y="141" text-anchor="middle">18</text><text x="351.4" y="141" text-anchor="middle">20</text><text x="371.89" y="141" text-anchor="middle">22</text><text x="392.38" y="141" text-anchor="middle">24</text><text x="412.87" y="141" text-anchor="middle">26</text><text x="433.36" y="141" text-anchor="middle">28</text><text x="453.85" y="141" text-anchor="middle">30</text><text x="474.34" y="141" text-anchor="middle">32</text><text x="494.83" y="141" text-anchor="middle">34</text><text x="515.32" y="141" text-anchor="middle">36</text><text x="535.81" y="141" text-anchor="middle">38</text><text x="556.3" y="141" text-anchor="middle">40</text><text x="576.79" y="141" text-anchor="middle">42</text><text x="597.28" y="141" text-anchor="middle">44</text><text x="617.77" y="141" text-anchor="middle">46</text><text x="638.26" y="141" text-anchor="middle">48</text><text x="658.75" y="141" text-anchor="middle">50</text><text x="679.24" y="141" text-anchor="middle">52</text><text x="699.73" y="141" text-anchor="middle">54</text><text x="720.22" y="141" text-anchor="middle">56</text><text x="740.71" y="141" text-anchor="middle">58</text><text x="761.2" y="141" text-anchor="middle">60</text><text x="781.69" y="141" text-anchor="middle">62</text><text x="802.18" y="141" text-anchor="middle">64</text><text x="822.67" y="141" text-anchor="middle">66</text><text x="843.16" y="141" text-anchor="middle">68</text><text x="863.65" y="141" text-anchor="middle">70</text><text x="884.14" y="141" text-anchor="middle">72</text><text x="904.63" y="141" text-anchor="middle">74</text><text x="925.12" y="141" text-anchor="middle">76</text><text x="945.61" y="141" text-anchor="middle">78</text><text x="966.1" y="141" text-anchor="middle">80</text><text x="986.59" y="141" text-anchor="middle">82</text><text x="1007.08" y="141" text-anchor="middle">84</text><text x="1027.57" y="141" text-anchor="middle">86</text><text x="1048.06" y="141" text-anchor="middle">88</text><text x="1068.55" y="141" text-anchor="middle">90</text><text x="1089.04" y="141" text-anchor="middle">92</text><text x="1109.53" y="141" text-anchor="middle">94</text><text x="1130.02" y="141" text-anchor="middle">96</text><text transform="translate(80.6 732.15) rotate(-90)" x="0" y="0" text-anchor="middle">-10</text><text transform="translate(80.6 711.66) rotate(-90)" x="0" y="0" text-anchor="middle">-8</text><text transform="translate(80.6 691.17) rotate(-90)" x="0" y="0" text-anchor="middle">-6</text><text transform="translate(80.6 670.68) rotate(-90)" x="0" y="0" text-anchor="middle">-4</text><text transform="translate(80.6 650.19) rotate(-90)" x="0" y="0" text-anchor="middle">-2</text><text transform="translate(80.6 629.7) rotate(-90)" x="0" y="0" text-anchor="middle">0</text><text transform="translate(80.6 609.21) rotate(-90)" x="0" y="0" text-anchor="middle">2</text><text transform="translate(80.6 588.72) rotate(-90)" x="0" y="0" text-anchor="middle">4</text><text transform="translate(80.6 568.23) rotate(-90)" x="0" y="0" text-anchor="middle">6</text><text transform="translate(80.6 547.74) rotate(-90)" x="0" y="0" text-anchor="middle">8</text><text transform="translate(80.6 527.25) rotate(-90)" x="0" y="0" text-anchor="middle">10</text><text transform="translate(80.6 506.76) rotate(-90)" x="0" y="0" text-anchor="middle">12</text><text transform="translate(80.6 486.27) rotate(-90)" x="0" y="0" text-anchor="middle">14</text><text transform="translate(80.6 465.78) rotate(-90)" x="0" y="0" text-anchor="middle">16</text><text transform="translate(80.6 445.29) rotate(-90)" x="0" y="0" text-anchor="middle">18</text><text transform="translate(80.6 424.8) rotate(-90)" x="0" y="0" text-anchor="middle">20</text><text transform="translate(80.6 404.31) rotate(-90)" x="0" y="0" text-anchor="middle">22</text><text transform="translate(80.6 383.82) rotate(-90)" x="0" y="0" text-anchor="middle">24</text><text transform="translate(80.6 363.33) rotate(-90)" x="0" y="0" text-anchor="middle">26</text><text transform="translate(80.6 342.84) rotate(-90)" x="0" y="0" text-anchor="middle">28</text><text transform="translate(80.6 322.35) rotate(-90)" x="0" y="0" text-anchor="middle">30</text><text transform="translate(80.6 301.86) rotate(-90)" x="0" y="0" text-anchor="middle">32</text><text transform="translate(80.6 281.37) rotate(-90)" x="0" y="0" text-anchor="middle">34</text><text transform="translate(80.6 260.88) rotate(-90)" x="0" y="0" text-anchor="middle">36</text><text transform="translate(80.6 240.39) rotate(-90)" x="0" y="0" text-anchor="middle">38</text><text transform="translate(80.6 219.9) rotate(-90)" x="0" y="0" text-anchor="middle">40</text><text transform="translate(80.6 199.41) rotate(-90)" x="0" y="0" text-anchor="middle">42</text><text transform="translate(80.6 178.92) rotate(-90)" x="0" y="0" text-anchor="middle">44</text><text transform="translate(80.6 158.43) rotate(-90)" x="0" y="0" text-anchor="middle">46</text></g>
<path d="M381.5 145 L393.5 145 L387.5 151Z M85 488 L85 500 L91 494Z" fill="#000"/>
</svg>
<div class="a" style="left:72px;top:132px;width:23px;height:23px;background:#ececec"></div>
<div class="a" style="left:72px;top:732px;width:23px;height:16px;background:#ececec"></div>
<svg style="position:absolute;left:95px;top:155px" width="1043" height="577" viewBox="95 155 1043 577">
<rect x="95" y="155" width="1043" height="577" fill="#000"/>
<line x1="146.5" y1="155" x2="146.5" y2="732" stroke="#1a1a1a" stroke-width="1"/>
<line x1="248.5" y1="155" x2="248.5" y2="732" stroke="#1a1a1a" stroke-width="1"/>
<line x1="351.5" y1="155" x2="351.5" y2="732" stroke="#1a1a1a" stroke-width="1"/>
<line x1="453.5" y1="155" x2="453.5" y2="732" stroke="#1a1a1a" stroke-width="1"/>
<line x1="556.5" y1="155" x2="556.5" y2="732" stroke="#1a1a1a" stroke-width="1"/>
<line x1="658.5" y1="155" x2="658.5" y2="732" stroke="#1a1a1a" stroke-width="1"/>
<line x1="761.5" y1="155" x2="761.5" y2="732" stroke="#1a1a1a" stroke-width="1"/>
<line x1="863.5" y1="155" x2="863.5" y2="732" stroke="#1a1a1a" stroke-width="1"/>
<line x1="966.5" y1="155" x2="966.5" y2="732" stroke="#1a1a1a" stroke-width="1"/>
<line x1="1068.5" y1="155" x2="1068.5" y2="732" stroke="#1a1a1a" stroke-width="1"/>
<line x1="95" y1="629.5" x2="1138" y2="629.5" stroke="#1a1a1a" stroke-width="1"/>
<line x1="95" y1="527.5" x2="1138" y2="527.5" stroke="#1a1a1a" stroke-width="1"/>
<line x1="95" y1="424.5" x2="1138" y2="424.5" stroke="#1a1a1a" stroke-width="1"/>
<line x1="95" y1="322.5" x2="1138" y2="322.5" stroke="#1a1a1a" stroke-width="1"/>
<line x1="95" y1="219.5" x2="1138" y2="219.5" stroke="#1a1a1a" stroke-width="1"/>
<path d="M95 721.5h1m10 0h1m9 0h1m9 0h1m9 0h1m9 0h1m10 0h1m9 0h1m9 0h1m9 0h1m10 0h1m9 0h1m9 0h1m9 0h1m10 0h1m9 0h1m9 0h1m9 0h1m10 0h1m9 0h1m9 0h1m9 0h1m10 0h1m9 0h1m9 0h1m9 0h1m10 0h1m9 0h1m9 0h1m9 0h1m10 0h1m9 0h1m9 0h1m9 0h1m10 0h1m9 0h1m9 0h1m9 0h1m10 0h1m9 0h1m9 0h1m9 0h1m10 0h1m9 0h1m9 0h1m9 0h1m10 0h1m9 0h1m9 0h1m9 0h1m10 0h1m9 0h1m9 0h1m9 0h1m10 0h1m9 0h1m9 0h1m9 0h1m9 0h1m10 0h1m9 0h1m9 0h1m9 0h1m10 0h1m9 0h1m9 0h1m9 0h1m10 0h1m9 0h1m9 0h1m9 0h1m10 0h1m9 0h1m9 0h1m9 0h1m10 0h1m9 0h1m9 0h1m9 0h1m10 0h1m9 0h1m9 0h1m9 0h1m10 0h1m9 0h1m9 0h1m9 0h1m10 0h1m9 0h1m9 0h1m9 0h1m10 0h1m9 0h1m9 0h1m9 0h1m10 0h1m9 0h1m9 0h1m9 0h1m10 0h1m9 0h1m9 0h1M95 711.5h1m10 0h1m9 0h1m9 0h1m9 0h1m9 0h1m10 0h1m9 0h1m9 0h1m9 0h1m10 0h1m9 0h1m9 0h1m9 0h1m10 0h1m9 0h1m9 0h1m9 0h1m10 0h1m9 0h1m9 0h1m9 0h1m10 0h1m9 0h1m9 0h1m9 0h1m10 0h1m9 0h1m9 0h1m9 0h1m10 0h1m9 0h1m9 0h1m9 0h1m10 0h1m9 0h1m9 0h1m9 0h1m10 0h1m9 0h1m9 0h1m9 0h1m10 0h1m9 0h1m9 0h1m9 0h1m10 0h1m9 0h1m9 0h1m9 0h1m10 0h1m9 0h1m9 0h1m9 0h1m10 0h1m9 0h1m9 0h1m9 0h1m9 0h1m10 0h1m9 0h1m9 0h1m9 0h1m10 0h1m9 0h1m9 0h1m9 0h1m10 0h1m9 0h1m9 0h1m9 0h1m10 0h1m9 0h1m9 0h1m9 0h1m10 0h1m9 0h1m9 0h1m9 0h1m10 0h1m9 0h1m9 0h1m9 0h1m10 0h1m9 0h1m9 0h1m9 0h1m10 0h1m9 0h1m9 0h1m9 0h1m10 0h1m9 0h1m9 0h1m9 0h1m10 0h1m9 0h1m9 0h1m9 0h1m10 0h1m9 0h1m9 0h1M95 701.5h1m10 0h1m9 0h1m9 0h1m9 0h1m9 0h1m10 0h1m9 0h1m9 0h1m9 0h1m10 0h1m9 0h1m9 0h1m9 0h1m10 0h1m9 0h1m9 0h1m9 0h1m10 0h1m9 0h1m9 0h1m9 0h1m10 0h1m9 0h1m9 0h1m9 0h1m10 0h1m9 0h1m9 0h1m9 0h1m10 0h1m9 0h1m9 0h1m9 0h1m10 0h1m9 0h1m9 0h1m9 0h1m10 0h1m9 0h1m9 0h1m9 0h1m10 0h1m9 0h1m9 0h1m9 0h1m10 0h1m9 0h1m9 0h1m9 0h1m10 0h1m9 0h1m9 0h1m9 0h1m10 0h1m9 0h1m9 0h1m9 0h1m9 0h1m10 0h1m9 0h1m9 0h1m9 0h1m10 0h1m9 0h1m9 0h1m9 0h1m10 0h1m9 0h1m9 0h1m9 0h1m10 0h1m9 0h1m9 0h1m9 0h1m10 0h1m9 0h1m9 0h1m9 0h1m10 0h1m9 0h1m9 0h1m9 0h1m10 0h1m9 0h1m9 0h1m9 0h1m10 0h1m9 0h1m9 0h1m9 0h1m10 0h1m9 0h1m9 0h1m9 0h1m10 0h1m9 0h1m9 0h1m9 0h1m10 0h1m9 0h1m9 0h1M95 691.5h1m10 0h1m9 0h1m9 0h1m9 0h1m9 0h1m10 0h1m9 0h1m9 0h1m9 0h1m10 0h1m9 0h1m9 0h1m9 0h1m10 0h1m9 0h1m9 0h1m9 0h1m10 0h1m9 0h1m9 0h1m9 0h1m10 0h1m9 0h1m9 0h1m9 0h1m10 0h1m9 0h1m9 0h1m9 0h1m10 0h1m9 0h1m9 0h1m9 0h1m10 0h1m9 0h1m9 0h1m9 0h1m10 0h1m9 0h1m9 0h1m9 0h1m10 0h1m9 0h1m9 0h1m9 0h1m10 0h1m9 0h1m9 0h1m9 0h1m10 0h1m9 0h1m9 0h1m9 0h1m10 0h1m9 0h1m9 0h1m9 0h1m9 0h1m10 0h1m9 0h1m9 0h1m9 0h1m10 0h1m9 0h1m9 0h1m9 0h1m10 0h1m9 0h1m9 0h1m9 0h1m10 0h1m9 0h1m9 0h1m9 0h1m10 0h1m9 0h1m9 0h1m9 0h1m10 0h1m9 0h1m9 0h1m9 0h1m10 0h1m9 0h1m9 0h1m9 0h1m10 0h1m9 0h1m9 0h1m9 0h1m10 0h1m9 0h1m9 0h1m9 0h1m10 0h1m9 0h1m9 0h1m9 0h1m10 0h1m9 0h1m9 0h1M95 680.5h1m10 0h1m9 0h1m9 0h1m9 0h1m9 0h1m10 0h1m9 0h1m9 0h1m9 0h1m10 0h1m9 0h1m9 0h1m9 0h1m10 0h1m9 0h1m9 0h1m9 0h1m10 0h1m9 0h1m9 0h1m9 0h1m10 0h1m9 0h1m9 0h1m9 0h1m10 0h1m9 0h1m9 0h1m9 0h1m10 0h1m9 0h1m9 0h1m9 0h1m10 0h1m9 0h1m9 0h1m9 0h1m10 0h1m9 0h1m9 0h1m9 0h1m10 0h1m9 0h1m9 0h1m9 0h1m10 0h1m9 0h1m9 0h1m9 0h1m10 0h1m9 0h1m9 0h1m9 0h1m10 0h1m9 0h1m9 0h1m9 0h1m9 0h1m10 0h1m9 0h1m9 0h1m9 0h1m10 0h1m9 0h1m9 0h1m9 0h1m10 0h1m9 0h1m9 0h1m9 0h1m10 0h1m9 0h1m9 0h1m9 0h1m10 0h1m9 0h1m9 0h1m9 0h1m10 0h1m9 0h1m9 0h1m9 0h1m10 0h1m9 0h1m9 0h1m9 0h1m10 0h1m9 0h1m9 0h1m9 0h1m10 0h1m9 0h1m9 0h1m9 0h1m10 0h1m9 0h1m9 0h1m9 0h1m10 0h1m9 0h1m9 0h1M95 670.5h1m10 0h1m9 0h1m9 0h1m9 0h1m9 0h1m10 0h1m9 0h1m9 0h1m9 0h1m10 0h1m9 0h1m9 0h1m9 0h1m10 0h1m9 0h1m9 0h1m9 0h1m10 0h1m9 0h1m9 0h1m9 0h1m10 0h1m9 0h1m9 0h1m9 0h1m10 0h1m9 0h1m9 0h1m9 0h1m10 0h1m9 0h1m9 0h1m9 0h1m10 0h1m9 0h1m9 0h1m9 0h1m10 0h1m9 0h1m9 0h1m9 0h1m10 0h1m9 0h1m9 0h1m9 0h1m10 0h1m9 0h1m9 0h1m9 0h1m10 0h1m9 0h1m9 0h1m9 0h1m10 0h1m9 0h1m9 0h1m9 0h1m9 0h1m10 0h1m9 0h1m9 0h1m9 0h1m10 0h1m9 0h1m9 0h1m9 0h1m10 0h1m9 0h1m9 0h1m9 0h1m10 0h1m9 0h1m9 0h1m9 0h1m10 0h1m9 0h1m9 0h1m9 0h1m10 0h1m9 0h1m9 0h1m9 0h1m10 0h1m9 0h1m9 0h1m9 0h1m10 0h1m9 0h1m9 0h1m9 0h1m10 0h1m9 0h1m9 0h1m9 0h1m10 0h1m9 0h1m9 0h1m9 0h1m10 0h1m9 0h1m9 0h1M95 660.5h1m10 0h1m9 0h1m9 0h1m9 0h1m9 0h1m10 0h1m9 0h1m9 0h1m9 0h1m10 0h1m9 0h1m9 0h1m9 0h1m10 0h1m9 0h1m9 0h1m9 0h1m10 0h1m9 0h1m9 0h1m9 0h1m10 0h1m9 0h1m9 0h1m9 0h1m10 0h1m9 0h1m9 0h1m9 0h1m10 0h1m9 0h1m9 0h1m9 0h1m10 0h1m9 0h1m9 0h1m9 0h1m10 0h1m9 0h1m9 0h1m9 0h1m10 0h1m9 0h1m9 0h1m9 0h1m10 0h1m9 0h1m9 0h1m9 0h1m10 0h1m9 0h1m9 0h1m9 0h1m10 0h1m9 0h1m9 0h1m9 0h1m9 0h1m10 0h1m9 0h1m9 0h1m9 0h1m10 0h1m9 0h1m9 0h1m9 0h1m10 0h1m9 0h1m9 0h1m9 0h1m10 0h1m9 0h1m9 0h1m9 0h1m10 0h1m9 0h1m9 0h1m9 0h1m10 0h1m9 0h1m9 0h1m9 0h1m10 0h1m9 0h1m9 0h1m9 0h1m10 0h1m9 0h1m9 0h1m9 0h1m10 0h1m9 0h1m9 0h1m9 0h1m10 0h1m9 0h1m9 0h1m9 0h1m10 0h1m9 0h1m9 0h1M95 650.5h1m10 0h1m9 0h1m9 0h1m9 0h1m9 0h1m10 0h1m9 0h1m9 0h1m9 0h1m10 0h1m9 0h1m9 0h1m9 0h1m10 0h1m9 0h1m9 0h1m9 0h1m10 0h1m9 0h1m9 0h1m9 0h1m10 0h1m9 0h1m9 0h1m9 0h1m10 0h1m9 0h1m9 0h1m9 0h1m10 0h1m9 0h1m9 0h1m9 0h1m10 0h1m9 0h1m9 0h1m9 0h1m10 0h1m9 0h1m9 0h1m9 0h1m10 0h1m9 0h1m9 0h1m9 0h1m10 0h1m9 0h1m9 0h1m9 0h1m10 0h1m9 0h1m9 0h1m9 0h1m10 0h1m9 0h1m9 0h1m9 0h1m9 0h1m10 0h1m9 0h1m9 0h1m9 0h1m10 0h1m9 0h1m9 0h1m9 0h1m10 0h1m9 0h1m9 0h1m9 0h1m10 0h1m9 0h1m9 0h1m9 0h1m10 0h1m9 0h1m9 0h1m9 0h1m10 0h1m9 0h1m9 0h1m9 0h1m10 0h1m9 0h1m9 0h1m9 0h1m10 0h1m9 0h1m9 0h1m9 0h1m10 0h1m9 0h1m9 0h1m9 0h1m10 0h1m9 0h1m9 0h1m9 0h1m10 0h1m9 0h1m9 0h1M95 639.5h1m10 0h1m9 0h1m9 0h1m9 0h1m9 0h1m10 0h1m9 0h1m9 0h1m9 0h1m10 0h1m9 0h1m9 0h1m9 0h1m10 0h1m9 0h1m9 0h1m9 0h1m10 0h1m9 0h1m9 0h1m9 0h1m10 0h1m9 0h1m9 0h1m9 0h1m10 0h1m9 0h1m9 0h1m9 0h1m10 0h1m9 0h1m9 0h1m9 0h1m10 0h1m9 0h1m9 0h1m9 0h1m10 0h1m9 0h1m9 0h1m9 0h1m10 0h1m9 0h1m9 0h1m9 0h1m10 0h1m9 0h1m9 0h1m9 0h1m10 0h1m9 0h1m9 0h1m9 0h1m10 0h1m9 0h1m9 0h1m9 0h1m9 0h1m10 0h1m9 0h1m9 0h1m9 0h1m10 0h1m9 0h1m9 0h1m9 0h1m10 0h1m9 0h1m9 0h1m9 0h1m10 0h1m9 0h1m9 0h1m9 0h1m10 0h1m9 0h1m9 0h1m9 0h1m10 0h1m9 0h1m9 0h1m9 0h1m10 0h1m9 0h1m9 0h1m9 0h1m10 0h1m9 0h1m9 0h1m9 0h1m10 0h1m9 0h1m9 0h1m9 0h1m10 0h1m9 0h1m9 0h1m9 0h1m10 0h1m9 0h1m9 0h1M95 629.5h1m10 0h1m9 0h1m9 0h1m9 0h1m9 0h1m10 0h1m9 0h1m9 0h1m9 0h1m10 0h1m9 0h1m9 0h1m9 0h1m10 0h1m9 0h1m9 0h1m9 0h1m10 0h1m9 0h1m9 0h1m9 0h1m10 0h1m9 0h1m9 0h1m9 0h1m10 0h1m9 0h1m9 0h1m9 0h1m10 0h1m9 0h1m9 0h1m9 0h1m10 0h1m9 0h1m9 0h1m9 0h1m10 0h1m9 0h1m9 0h1m9 0h1m10 0h1m9 0h1m9 0h1m9 0h1m10 0h1m9 0h1m9 0h1m9 0h1m10 0h1m9 0h1m9 0h1m9 0h1m10 0h1m9 0h1m9 0h1m9 0h1m9 0h1m10 0h1m9 0h1m9 0h1m9 0h1m10 0h1m9 0h1m9 0h1m9 0h1m10 0h1m9 0h1m9 0h1m9 0h1m10 0h1m9 0h1m9 0h1m9 0h1m10 0h1m9 0h1m9 0h1m9 0h1m10 0h1m9 0h1m9 0h1m9 0h1m10 0h1m9 0h1m9 0h1m9 0h1m10 0h1m9 0h1m9 0h1m9 0h1m10 0h1m9 0h1m9 0h1m9 0h1m10 0h1m9 0h1m9 0h1m9 0h1m10 0h1m9 0h1m9 0h1M95 619.5h1m10 0h1m9 0h1m9 0h1m9 0h1m9 0h1m10 0h1m9 0h1m9 0h1m9 0h1m10 0h1m9 0h1m9 0h1m9 0h1m10 0h1m9 0h1m9 0h1m9 0h1m10 0h1m9 0h1m9 0h1m9 0h1m10 0h1m9 0h1m9 0h1m9 0h1m10 0h1m9 0h1m9 0h1m9 0h1m10 0h1m9 0h1m9 0h1m9 0h1m10 0h1m9 0h1m9 0h1m9 0h1m10 0h1m9 0h1m9 0h1m9 0h1m10 0h1m9 0h1m9 0h1m9 0h1m10 0h1m9 0h1m9 0h1m9 0h1m10 0h1m9 0h1m9 0h1m9 0h1m10 0h1m9 0h1m9 0h1m9 0h1m9 0h1m10 0h1m9 0h1m9 0h1m9 0h1m10 0h1m9 0h1m9 0h1m9 0h1m10 0h1m9 0h1m9 0h1m9 0h1m10 0h1m9 0h1m9 0h1m9 0h1m10 0h1m9 0h1m9 0h1m9 0h1m10 0h1m9 0h1m9 0h1m9 0h1m10 0h1m9 0h1m9 0h1m9 0h1m10 0h1m9 0h1m9 0h1m9 0h1m10 0h1m9 0h1m9 0h1m9 0h1m10 0h1m9 0h1m9 0h1m9 0h1m10 0h1m9 0h1m9 0h1M95 609.5h1m10 0h1m9 0h1m9 0h1m9 0h1m9 0h1m10 0h1m9 0h1m9 0h1m9 0h1m10 0h1m9 0h1m9 0h1m9 0h1m10 0h1m9 0h1m9 0h1m9 0h1m10 0h1m9 0h1m9 0h1m9 0h1m10 0h1m9 0h1m9 0h1m9 0h1m10 0h1m9 0h1m9 0h1m9 0h1m10 0h1m9 0h1m9 0h1m9 0h1m10 0h1m9 0h1m9 0h1m9 0h1m10 0h1m9 0h1m9 0h1m9 0h1m10 0h1m9 0h1m9 0h1m9 0h1m10 0h1m9 0h1m9 0h1m9 0h1m10 0h1m9 0h1m9 0h1m9 0h1m10 0h1m9 0h1m9 0h1m9 0h1m9 0h1m10 0h1m9 0h1m9 0h1m9 0h1m10 0h1m9 0h1m9 0h1m9 0h1m10 0h1m9 0h1m9 0h1m9 0h1m10 0h1m9 0h1m9 0h1m9 0h1m10 0h1m9 0h1m9 0h1m9 0h1m10 0h1m9 0h1m9 0h1m9 0h1m10 0h1m9 0h1m9 0h1m9 0h1m10 0h1m9 0h1m9 0h1m9 0h1m10 0h1m9 0h1m9 0h1m9 0h1m10 0h1m9 0h1m9 0h1m9 0h1m10 0h1m9 0h1m9 0h1M95 598.5h1m10 0h1m9 0h1m9 0h1m9 0h1m9 0h1m10 0h1m9 0h1m9 0h1m9 0h1m10 0h1m9 0h1m9 0h1m9 0h1m10 0h1m9 0h1m9 0h1m9 0h1m10 0h1m9 0h1m9 0h1m9 0h1m10 0h1m9 0h1m9 0h1m9 0h1m10 0h1m9 0h1m9 0h1m9 0h1m10 0h1m9 0h1m9 0h1m9 0h1m10 0h1m9 0h1m9 0h1m9 0h1m10 0h1m9 0h1m9 0h1m9 0h1m10 0h1m9 0h1m9 0h1m9 0h1m10 0h1m9 0h1m9 0h1m9 0h1m10 0h1m9 0h1m9 0h1m9 0h1m10 0h1m9 0h1m9 0h1m9 0h1m9 0h1m10 0h1m9 0h1m9 0h1m9 0h1m10 0h1m9 0h1m9 0h1m9 0h1m10 0h1m9 0h1m9 0h1m9 0h1m10 0h1m9 0h1m9 0h1m9 0h1m10 0h1m9 0h1m9 0h1m9 0h1m10 0h1m9 0h1m9 0h1m9 0h1m10 0h1m9 0h1m9 0h1m9 0h1m10 0h1m9 0h1m9 0h1m9 0h1m10 0h1m9 0h1m9 0h1m9 0h1m10 0h1m9 0h1m9 0h1m9 0h1m10 0h1m9 0h1m9 0h1M95 588.5h1m10 0h1m9 0h1m9 0h1m9 0h1m9 0h1m10 0h1m9 0h1m9 0h1m9 0h1m10 0h1m9 0h1m9 0h1m9 0h1m10 0h1m9 0h1m9 0h1m9 0h1m10 0h1m9 0h1m9 0h1m9 0h1m10 0h1m9 0h1m9 0h1m9 0h1m10 0h1m9 0h1m9 0h1m9 0h1m10 0h1m9 0h1m9 0h1m9 0h1m10 0h1m9 0h1m9 0h1m9 0h1m10 0h1m9 0h1m9 0h1m9 0h1m10 0h1m9 0h1m9 0h1m9 0h1m10 0h1m9 0h1m9 0h1m9 0h1m10 0h1m9 0h1m9 0h1m9 0h1m10 0h1m9 0h1m9 0h1m9 0h1m9 0h1m10 0h1m9 0h1m9 0h1m9 0h1m10 0h1m9 0h1m9 0h1m9 0h1m10 0h1m9 0h1m9 0h1m9 0h1m10 0h1m9 0h1m9 0h1m9 0h1m10 0h1m9 0h1m9 0h1m9 0h1m10 0h1m9 0h1m9 0h1m9 0h1m10 0h1m9 0h1m9 0h1m9 0h1m10 0h1m9 0h1m9 0h1m9 0h1m10 0h1m9 0h1m9 0h1m9 0h1m10 0h1m9 0h1m9 0h1m9 0h1m10 0h1m9 0h1m9 0h1M95 578.5h1m10 0h1m9 0h1m9 0h1m9 0h1m9 0h1m10 0h1m9 0h1m9 0h1m9 0h1m10 0h1m9 0h1m9 0h1m9 0h1m10 0h1m9 0h1m9 0h1m9 0h1m10 0h1m9 0h1m9 0h1m9 0h1m10 0h1m9 0h1m9 0h1m9 0h1m10 0h1m9 0h1m9 0h1m9 0h1m10 0h1m9 0h1m9 0h1m9 0h1m10 0h1m9 0h1m9 0h1m9 0h1m10 0h1m9 0h1m9 0h1m9 0h1m10 0h1m9 0h1m9 0h1m9 0h1m10 0h1m9 0h1m9 0h1m9 0h1m10 0h1m9 0h1m9 0h1m9 0h1m10 0h1m9 0h1m9 0h1m9 0h1m9 0h1m10 0h1m9 0h1m9 0h1m9 0h1m10 0h1m9 0h1m9 0h1m9 0h1m10 0h1m9 0h1m9 0h1m9 0h1m10 0h1m9 0h1m9 0h1m9 0h1m10 0h1m9 0h1m9 0h1m9 0h1m10 0h1m9 0h1m9 0h1m9 0h1m10 0h1m9 0h1m9 0h1m9 0h1m10 0h1m9 0h1m9 0h1m9 0h1m10 0h1m9 0h1m9 0h1m9 0h1m10 0h1m9 0h1m9 0h1m9 0h1m10 0h1m9 0h1m9 0h1M95 568.5h1m10 0h1m9 0h1m9 0h1m9 0h1m9 0h1m10 0h1m9 0h1m9 0h1m9 0h1m10 0h1m9 0h1m9 0h1m9 0h1m10 0h1m9 0h1m9 0h1m9 0h1m10 0h1m9 0h1m9 0h1m9 0h1m10 0h1m9 0h1m9 0h1m9 0h1m10 0h1m9 0h1m9 0h1m9 0h1m10 0h1m9 0h1m9 0h1m9 0h1m10 0h1m9 0h1m9 0h1m9 0h1m10 0h1m9 0h1m9 0h1m9 0h1m10 0h1m9 0h1m9 0h1m9 0h1m10 0h1m9 0h1m9 0h1m9 0h1m10 0h1m9 0h1m9 0h1m9 0h1m10 0h1m9 0h1m9 0h1m9 0h1m9 0h1m10 0h1m9 0h1m9 0h1m9 0h1m10 0h1m9 0h1m9 0h1m9 0h1m10 0h1m9 0h1m9 0h1m9 0h1m10 0h1m9 0h1m9 0h1m9 0h1m10 0h1m9 0h1m9 0h1m9 0h1m10 0h1m9 0h1m9 0h1m9 0h1m10 0h1m9 0h1m9 0h1m9 0h1m10 0h1m9 0h1m9 0h1m9 0h1m10 0h1m9 0h1m9 0h1m9 0h1m10 0h1m9 0h1m9 0h1m9 0h1m10 0h1m9 0h1m9 0h1M95 557.5h1m10 0h1m9 0h1m9 0h1m9 0h1m9 0h1m10 0h1m9 0h1m9 0h1m9 0h1m10 0h1m9 0h1m9 0h1m9 0h1m10 0h1m9 0h1m9 0h1m9 0h1m10 0h1m9 0h1m9 0h1m9 0h1m10 0h1m9 0h1m9 0h1m9 0h1m10 0h1m9 0h1m9 0h1m9 0h1m10 0h1m9 0h1m9 0h1m9 0h1m10 0h1m9 0h1m9 0h1m9 0h1m10 0h1m9 0h1m9 0h1m9 0h1m10 0h1m9 0h1m9 0h1m9 0h1m10 0h1m9 0h1m9 0h1m9 0h1m10 0h1m9 0h1m9 0h1m9 0h1m10 0h1m9 0h1m9 0h1m9 0h1m9 0h1m10 0h1m9 0h1m9 0h1m9 0h1m10 0h1m9 0h1m9 0h1m9 0h1m10 0h1m9 0h1m9 0h1m9 0h1m10 0h1m9 0h1m9 0h1m9 0h1m10 0h1m9 0h1m9 0h1m9 0h1m10 0h1m9 0h1m9 0h1m9 0h1m10 0h1m9 0h1m9 0h1m9 0h1m10 0h1m9 0h1m9 0h1m9 0h1m10 0h1m9 0h1m9 0h1m9 0h1m10 0h1m9 0h1m9 0h1m9 0h1m10 0h1m9 0h1m9 0h1M95 547.5h1m10 0h1m9 0h1m9 0h1m9 0h1m9 0h1m10 0h1m9 0h1m9 0h1m9 0h1m10 0h1m9 0h1m9 0h1m9 0h1m10 0h1m9 0h1m9 0h1m9 0h1m10 0h1m9 0h1m9 0h1m9 0h1m10 0h1m9 0h1m9 0h1m9 0h1m10 0h1m9 0h1m9 0h1m9 0h1m10 0h1m9 0h1m9 0h1m9 0h1m10 0h1m9 0h1m9 0h1m9 0h1m10 0h1m9 0h1m9 0h1m9 0h1m10 0h1m9 0h1m9 0h1m9 0h1m10 0h1m9 0h1m9 0h1m9 0h1m10 0h1m9 0h1m9 0h1m9 0h1m10 0h1m9 0h1m9 0h1m9 0h1m9 0h1m10 0h1m9 0h1m9 0h1m9 0h1m10 0h1m9 0h1m9 0h1m9 0h1m10 0h1m9 0h1m9 0h1m9 0h1m10 0h1m9 0h1m9 0h1m9 0h1m10 0h1m9 0h1m9 0h1m9 0h1m10 0h1m9 0h1m9 0h1m9 0h1m10 0h1m9 0h1m9 0h1m9 0h1m10 0h1m9 0h1m9 0h1m9 0h1m10 0h1m9 0h1m9 0h1m9 0h1m10 0h1m9 0h1m9 0h1m9 0h1m10 0h1m9 0h1m9 0h1M95 537.5h1m10 0h1m9 0h1m9 0h1m9 0h1m9 0h1m10 0h1m9 0h1m9 0h1m9 0h1m10 0h1m9 0h1m9 0h1m9 0h1m10 0h1m9 0h1m9 0h1m9 0h1m10 0h1m9 0h1m9 0h1m9 0h1m10 0h1m9 0h1m9 0h1m9 0h1m10 0h1m9 0h1m9 0h1m9 0h1m10 0h1m9 0h1m9 0h1m9 0h1m10 0h1m9 0h1m9 0h1m9 0h1m10 0h1m9 0h1m9 0h1m9 0h1m10 0h1m9 0h1m9 0h1m9 0h1m10 0h1m9 0h1m9 0h1m9 0h1m10 0h1m9 0h1m9 0h1m9 0h1m10 0h1m9 0h1m9 0h1m9 0h1m9 0h1m10 0h1m9 0h1m9 0h1m9 0h1m10 0h1m9 0h1m9 0h1m9 0h1m10 0h1m9 0h1m9 0h1m9 0h1m10 0h1m9 0h1m9 0h1m9 0h1m10 0h1m9 0h1m9 0h1m9 0h1m10 0h1m9 0h1m9 0h1m9 0h1m10 0h1m9 0h1m9 0h1m9 0h1m10 0h1m9 0h1m9 0h1m9 0h1m10 0h1m9 0h1m9 0h1m9 0h1m10 0h1m9 0h1m9 0h1m9 0h1m10 0h1m9 0h1m9 0h1M95 527.5h1m10 0h1m9 0h1m9 0h1m9 0h1m9 0h1m10 0h1m9 0h1m9 0h1m9 0h1m10 0h1m9 0h1m9 0h1m9 0h1m10 0h1m9 0h1m9 0h1m9 0h1m10 0h1m9 0h1m9 0h1m9 0h1m10 0h1m9 0h1m9 0h1m9 0h1m10 0h1m9 0h1m9 0h1m9 0h1m10 0h1m9 0h1m9 0h1m9 0h1m10 0h1m9 0h1m9 0h1m9 0h1m10 0h1m9 0h1m9 0h1m9 0h1m10 0h1m9 0h1m9 0h1m9 0h1m10 0h1m9 0h1m9 0h1m9 0h1m10 0h1m9 0h1m9 0h1m9 0h1m10 0h1m9 0h1m9 0h1m9 0h1m9 0h1m10 0h1m9 0h1m9 0h1m9 0h1m10 0h1m9 0h1m9 0h1m9 0h1m10 0h1m9 0h1m9 0h1m9 0h1m10 0h1m9 0h1m9 0h1m9 0h1m10 0h1m9 0h1m9 0h1m9 0h1m10 0h1m9 0h1m9 0h1m9 0h1m10 0h1m9 0h1m9 0h1m9 0h1m10 0h1m9 0h1m9 0h1m9 0h1m10 0h1m9 0h1m9 0h1m9 0h1m10 0h1m9 0h1m9 0h1m9 0h1m10 0h1m9 0h1m9 0h1M95 517.5h1m10 0h1m9 0h1m9 0h1m9 0h1m9 0h1m10 0h1m9 0h1m9 0h1m9 0h1m10 0h1m9 0h1m9 0h1m9 0h1m10 0h1m9 0h1m9 0h1m9 0h1m10 0h1m9 0h1m9 0h1m9 0h1m10 0h1m9 0h1m9 0h1m9 0h1m10 0h1m9 0h1m9 0h1m9 0h1m10 0h1m9 0h1m9 0h1m9 0h1m10 0h1m9 0h1m9 0h1m9 0h1m10 0h1m9 0h1m9 0h1m9 0h1m10 0h1m9 0h1m9 0h1m9 0h1m10 0h1m9 0h1m9 0h1m9 0h1m10 0h1m9 0h1m9 0h1m9 0h1m10 0h1m9 0h1m9 0h1m9 0h1m9 0h1m10 0h1m9 0h1m9 0h1m9 0h1m10 0h1m9 0h1m9 0h1m9 0h1m10 0h1m9 0h1m9 0h1m9 0h1m10 0h1m9 0h1m9 0h1m9 0h1m10 0h1m9 0h1m9 0h1m9 0h1m10 0h1m9 0h1m9 0h1m9 0h1m10 0h1m9 0h1m9 0h1m9 0h1m10 0h1m9 0h1m9 0h1m9 0h1m10 0h1m9 0h1m9 0h1m9 0h1m10 0h1m9 0h1m9 0h1m9 0h1m10 0h1m9 0h1m9 0h1M95 506.5h1m10 0h1m9 0h1m9 0h1m9 0h1m9 0h1m10 0h1m9 0h1m9 0h1m9 0h1m10 0h1m9 0h1m9 0h1m9 0h1m10 0h1m9 0h1m9 0h1m9 0h1m10 0h1m9 0h1m9 0h1m9 0h1m10 0h1m9 0h1m9 0h1m9 0h1m10 0h1m9 0h1m9 0h1m9 0h1m10 0h1m9 0h1m9 0h1m9 0h1m10 0h1m9 0h1m9 0h1m9 0h1m10 0h1m9 0h1m9 0h1m9 0h1m10 0h1m9 0h1m9 0h1m9 0h1m10 0h1m9 0h1m9 0h1m9 0h1m10 0h1m9 0h1m9 0h1m9 0h1m10 0h1m9 0h1m9 0h1m9 0h1m9 0h1m10 0h1m9 0h1m9 0h1m9 0h1m10 0h1m9 0h1m9 0h1m9 0h1m10 0h1m9 0h1m9 0h1m9 0h1m10 0h1m9 0h1m9 0h1m9 0h1m10 0h1m9 0h1m9 0h1m9 0h1m10 0h1m9 0h1m9 0h1m9 0h1m10 0h1m9 0h1m9 0h1m9 0h1m10 0h1m9 0h1m9 0h1m9 0h1m10 0h1m9 0h1m9 0h1m9 0h1m10 0h1m9 0h1m9 0h1m9 0h1m10 0h1m9 0h1m9 0h1M95 496.5h1m10 0h1m9 0h1m9 0h1m9 0h1m9 0h1m10 0h1m9 0h1m9 0h1m9 0h1m10 0h1m9 0h1m9 0h1m9 0h1m10 0h1m9 0h1m9 0h1m9 0h1m10 0h1m9 0h1m9 0h1m9 0h1m10 0h1m9 0h1m9 0h1m9 0h1m10 0h1m9 0h1m9 0h1m9 0h1m10 0h1m9 0h1m9 0h1m9 0h1m10 0h1m9 0h1m9 0h1m9 0h1m10 0h1m9 0h1m9 0h1m9 0h1m10 0h1m9 0h1m9 0h1m9 0h1m10 0h1m9 0h1m9 0h1m9 0h1m10 0h1m9 0h1m9 0h1m9 0h1m10 0h1m9 0h1m9 0h1m9 0h1m9 0h1m10 0h1m9 0h1m9 0h1m9 0h1m10 0h1m9 0h1m9 0h1m9 0h1m10 0h1m9 0h1m9 0h1m9 0h1m10 0h1m9 0h1m9 0h1m9 0h1m10 0h1m9 0h1m9 0h1m9 0h1m10 0h1m9 0h1m9 0h1m9 0h1m10 0h1m9 0h1m9 0h1m9 0h1m10 0h1m9 0h1m9 0h1m9 0h1m10 0h1m9 0h1m9 0h1m9 0h1m10 0h1m9 0h1m9 0h1m9 0h1m10 0h1m9 0h1m9 0h1M95 486.5h1m10 0h1m9 0h1m9 0h1m9 0h1m9 0h1m10 0h1m9 0h1m9 0h1m9 0h1m10 0h1m9 0h1m9 0h1m9 0h1m10 0h1m9 0h1m9 0h1m9 0h1m10 0h1m9 0h1m9 0h1m9 0h1m10 0h1m9 0h1m9 0h1m9 0h1m10 0h1m9 0h1m9 0h1m9 0h1m10 0h1m9 0h1m9 0h1m9 0h1m10 0h1m9 0h1m9 0h1m9 0h1m10 0h1m9 0h1m9 0h1m9 0h1m10 0h1m9 0h1m9 0h1m9 0h1m10 0h1m9 0h1m9 0h1m9 0h1m10 0h1m9 0h1m9 0h1m9 0h1m10 0h1m9 0h1m9 0h1m9 0h1m9 0h1m10 0h1m9 0h1m9 0h1m9 0h1m10 0h1m9 0h1m9 0h1m9 0h1m10 0h1m9 0h1m9 0h1m9 0h1m10 0h1m9 0h1m9 0h1m9 0h1m10 0h1m9 0h1m9 0h1m9 0h1m10 0h1m9 0h1m9 0h1m9 0h1m10 0h1m9 0h1m9 0h1m9 0h1m10 0h1m9 0h1m9 0h1m9 0h1m10 0h1m9 0h1m9 0h1m9 0h1m10 0h1m9 0h1m9 0h1m9 0h1m10 0h1m9 0h1m9 0h1M95 476.5h1m10 0h1m9 0h1m9 0h1m9 0h1m9 0h1m10 0h1m9 0h1m9 0h1m9 0h1m10 0h1m9 0h1m9 0h1m9 0h1m10 0h1m9 0h1m9 0h1m9 0h1m10 0h1m9 0h1m9 0h1m9 0h1m10 0h1m9 0h1m9 0h1m9 0h1m10 0h1m9 0h1m9 0h1m9 0h1m10 0h1m9 0h1m9 0h1m9 0h1m10 0h1m9 0h1m9 0h1m9 0h1m10 0h1m9 0h1m9 0h1m9 0h1m10 0h1m9 0h1m9 0h1m9 0h1m10 0h1m9 0h1m9 0h1m9 0h1m10 0h1m9 0h1m9 0h1m9 0h1m10 0h1m9 0h1m9 0h1m9 0h1m9 0h1m10 0h1m9 0h1m9 0h1m9 0h1m10 0h1m9 0h1m9 0h1m9 0h1m10 0h1m9 0h1m9 0h1m9 0h1m10 0h1m9 0h1m9 0h1m9 0h1m10 0h1m9 0h1m9 0h1m9 0h1m10 0h1m9 0h1m9 0h1m9 0h1m10 0h1m9 0h1m9 0h1m9 0h1m10 0h1m9 0h1m9 0h1m9 0h1m10 0h1m9 0h1m9 0h1m9 0h1m10 0h1m9 0h1m9 0h1m9 0h1m10 0h1m9 0h1m9 0h1M95 465.5h1m10 0h1m9 0h1m9 0h1m9 0h1m9 0h1m10 0h1m9 0h1m9 0h1m9 0h1m10 0h1m9 0h1m9 0h1m9 0h1m10 0h1m9 0h1m9 0h1m9 0h1m10 0h1m9 0h1m9 0h1m9 0h1m10 0h1m9 0h1m9 0h1m9 0h1m10 0h1m9 0h1m9 0h1m9 0h1m10 0h1m9 0h1m9 0h1m9 0h1m10 0h1m9 0h1m9 0h1m9 0h1m10 0h1m9 0h1m9 0h1m9 0h1m10 0h1m9 0h1m9 0h1m9 0h1m10 0h1m9 0h1m9 0h1m9 0h1m10 0h1m9 0h1m9 0h1m9 0h1m10 0h1m9 0h1m9 0h1m9 0h1m9 0h1m10 0h1m9 0h1m9 0h1m9 0h1m10 0h1m9 0h1m9 0h1m9 0h1m10 0h1m9 0h1m9 0h1m9 0h1m10 0h1m9 0h1m9 0h1m9 0h1m10 0h1m9 0h1m9 0h1m9 0h1m10 0h1m9 0h1m9 0h1m9 0h1m10 0h1m9 0h1m9 0h1m9 0h1m10 0h1m9 0h1m9 0h1m9 0h1m10 0h1m9 0h1m9 0h1m9 0h1m10 0h1m9 0h1m9 0h1m9 0h1m10 0h1m9 0h1m9 0h1M95 455.5h1m10 0h1m9 0h1m9 0h1m9 0h1m9 0h1m10 0h1m9 0h1m9 0h1m9 0h1m10 0h1m9 0h1m9 0h1m9 0h1m10 0h1m9 0h1m9 0h1m9 0h1m10 0h1m9 0h1m9 0h1m9 0h1m10 0h1m9 0h1m9 0h1m9 0h1m10 0h1m9 0h1m9 0h1m9 0h1m10 0h1m9 0h1m9 0h1m9 0h1m10 0h1m9 0h1m9 0h1m9 0h1m10 0h1m9 0h1m9 0h1m9 0h1m10 0h1m9 0h1m9 0h1m9 0h1m10 0h1m9 0h1m9 0h1m9 0h1m10 0h1m9 0h1m9 0h1m9 0h1m10 0h1m9 0h1m9 0h1m9 0h1m9 0h1m10 0h1m9 0h1m9 0h1m9 0h1m10 0h1m9 0h1m9 0h1m9 0h1m10 0h1m9 0h1m9 0h1m9 0h1m10 0h1m9 0h1m9 0h1m9 0h1m10 0h1m9 0h1m9 0h1m9 0h1m10 0h1m9 0h1m9 0h1m9 0h1m10 0h1m9 0h1m9 0h1m9 0h1m10 0h1m9 0h1m9 0h1m9 0h1m10 0h1m9 0h1m9 0h1m9 0h1m10 0h1m9 0h1m9 0h1m9 0h1m10 0h1m9 0h1m9 0h1M95 445.5h1m10 0h1m9 0h1m9 0h1m9 0h1m9 0h1m10 0h1m9 0h1m9 0h1m9 0h1m10 0h1m9 0h1m9 0h1m9 0h1m10 0h1m9 0h1m9 0h1m9 0h1m10 0h1m9 0h1m9 0h1m9 0h1m10 0h1m9 0h1m9 0h1m9 0h1m10 0h1m9 0h1m9 0h1m9 0h1m10 0h1m9 0h1m9 0h1m9 0h1m10 0h1m9 0h1m9 0h1m9 0h1m10 0h1m9 0h1m9 0h1m9 0h1m10 0h1m9 0h1m9 0h1m9 0h1m10 0h1m9 0h1m9 0h1m9 0h1m10 0h1m9 0h1m9 0h1m9 0h1m10 0h1m9 0h1m9 0h1m9 0h1m9 0h1m10 0h1m9 0h1m9 0h1m9 0h1m10 0h1m9 0h1m9 0h1m9 0h1m10 0h1m9 0h1m9 0h1m9 0h1m10 0h1m9 0h1m9 0h1m9 0h1m10 0h1m9 0h1m9 0h1m9 0h1m10 0h1m9 0h1m9 0h1m9 0h1m10 0h1m9 0h1m9 0h1m9 0h1m10 0h1m9 0h1m9 0h1m9 0h1m10 0h1m9 0h1m9 0h1m9 0h1m10 0h1m9 0h1m9 0h1m9 0h1m10 0h1m9 0h1m9 0h1M95 435.5h1m10 0h1m9 0h1m9 0h1m9 0h1m9 0h1m10 0h1m9 0h1m9 0h1m9 0h1m10 0h1m9 0h1m9 0h1m9 0h1m10 0h1m9 0h1m9 0h1m9 0h1m10 0h1m9 0h1m9 0h1m9 0h1m10 0h1m9 0h1m9 0h1m9 0h1m10 0h1m9 0h1m9 0h1m9 0h1m10 0h1m9 0h1m9 0h1m9 0h1m10 0h1m9 0h1m9 0h1m9 0h1m10 0h1m9 0h1m9 0h1m9 0h1m10 0h1m9 0h1m9 0h1m9 0h1m10 0h1m9 0h1m9 0h1m9 0h1m10 0h1m9 0h1m9 0h1m9 0h1m10 0h1m9 0h1m9 0h1m9 0h1m9 0h1m10 0h1m9 0h1m9 0h1m9 0h1m10 0h1m9 0h1m9 0h1m9 0h1m10 0h1m9 0h1m9 0h1m9 0h1m10 0h1m9 0h1m9 0h1m9 0h1m10 0h1m9 0h1m9 0h1m9 0h1m10 0h1m9 0h1m9 0h1m9 0h1m10 0h1m9 0h1m9 0h1m9 0h1m10 0h1m9 0h1m9 0h1m9 0h1m10 0h1m9 0h1m9 0h1m9 0h1m10 0h1m9 0h1m9 0h1m9 0h1m10 0h1m9 0h1m9 0h1M95 424.5h1m10 0h1m9 0h1m9 0h1m9 0h1m9 0h1m10 0h1m9 0h1m9 0h1m9 0h1m10 0h1m9 0h1m9 0h1m9 0h1m10 0h1m9 0h1m9 0h1m9 0h1m10 0h1m9 0h1m9 0h1m9 0h1m10 0h1m9 0h1m9 0h1m9 0h1m10 0h1m9 0h1m9 0h1m9 0h1m10 0h1m9 0h1m9 0h1m9 0h1m10 0h1m9 0h1m9 0h1m9 0h1m10 0h1m9 0h1m9 0h1m9 0h1m10 0h1m9 0h1m9 0h1m9 0h1m10 0h1m9 0h1m9 0h1m9 0h1m10 0h1m9 0h1m9 0h1m9 0h1m10 0h1m9 0h1m9 0h1m9 0h1m9 0h1m10 0h1m9 0h1m9 0h1m9 0h1m10 0h1m9 0h1m9 0h1m9 0h1m10 0h1m9 0h1m9 0h1m9 0h1m10 0h1m9 0h1m9 0h1m9 0h1m10 0h1m9 0h1m9 0h1m9 0h1m10 0h1m9 0h1m9 0h1m9 0h1m10 0h1m9 0h1m9 0h1m9 0h1m10 0h1m9 0h1m9 0h1m9 0h1m10 0h1m9 0h1m9 0h1m9 0h1m10 0h1m9 0h1m9 0h1m9 0h1m10 0h1m9 0h1m9 0h1M95 414.5h1m10 0h1m9 0h1m9 0h1m9 0h1m9 0h1m10 0h1m9 0h1m9 0h1m9 0h1m10 0h1m9 0h1m9 0h1m9 0h1m10 0h1m9 0h1m9 0h1m9 0h1m10 0h1m9 0h1m9 0h1m9 0h1m10 0h1m9 0h1m9 0h1m9 0h1m10 0h1m9 0h1m9 0h1m9 0h1m10 0h1m9 0h1m9 0h1m9 0h1m10 0h1m9 0h1m9 0h1m9 0h1m10 0h1m9 0h1m9 0h1m9 0h1m10 0h1m9 0h1m9 0h1m9 0h1m10 0h1m9 0h1m9 0h1m9 0h1m10 0h1m9 0h1m9 0h1m9 0h1m10 0h1m9 0h1m9 0h1m9 0h1m9 0h1m10 0h1m9 0h1m9 0h1m9 0h1m10 0h1m9 0h1m9 0h1m9 0h1m10 0h1m9 0h1m9 0h1m9 0h1m10 0h1m9 0h1m9 0h1m9 0h1m10 0h1m9 0h1m9 0h1m9 0h1m10 0h1m9 0h1m9 0h1m9 0h1m10 0h1m9 0h1m9 0h1m9 0h1m10 0h1m9 0h1m9 0h1m9 0h1m10 0h1m9 0h1m9 0h1m9 0h1m10 0h1m9 0h1m9 0h1m9 0h1m10 0h1m9 0h1m9 0h1M95 404.5h1m10 0h1m9 0h1m9 0h1m9 0h1m9 0h1m10 0h1m9 0h1m9 0h1m9 0h1m10 0h1m9 0h1m9 0h1m9 0h1m10 0h1m9 0h1m9 0h1m9 0h1m10 0h1m9 0h1m9 0h1m9 0h1m10 0h1m9 0h1m9 0h1m9 0h1m10 0h1m9 0h1m9 0h1m9 0h1m10 0h1m9 0h1m9 0h1m9 0h1m10 0h1m9 0h1m9 0h1m9 0h1m10 0h1m9 0h1m9 0h1m9 0h1m10 0h1m9 0h1m9 0h1m9 0h1m10 0h1m9 0h1m9 0h1m9 0h1m10 0h1m9 0h1m9 0h1m9 0h1m10 0h1m9 0h1m9 0h1m9 0h1m9 0h1m10 0h1m9 0h1m9 0h1m9 0h1m10 0h1m9 0h1m9 0h1m9 0h1m10 0h1m9 0h1m9 0h1m9 0h1m10 0h1m9 0h1m9 0h1m9 0h1m10 0h1m9 0h1m9 0h1m9 0h1m10 0h1m9 0h1m9 0h1m9 0h1m10 0h1m9 0h1m9 0h1m9 0h1m10 0h1m9 0h1m9 0h1m9 0h1m10 0h1m9 0h1m9 0h1m9 0h1m10 0h1m9 0h1m9 0h1m9 0h1m10 0h1m9 0h1m9 0h1M95 394.5h1m10 0h1m9 0h1m9 0h1m9 0h1m9 0h1m10 0h1m9 0h1m9 0h1m9 0h1m10 0h1m9 0h1m9 0h1m9 0h1m10 0h1m9 0h1m9 0h1m9 0h1m10 0h1m9 0h1m9 0h1m9 0h1m10 0h1m9 0h1m9 0h1m9 0h1m10 0h1m9 0h1m9 0h1m9 0h1m10 0h1m9 0h1m9 0h1m9 0h1m10 0h1m9 0h1m9 0h1m9 0h1m10 0h1m9 0h1m9 0h1m9 0h1m10 0h1m9 0h1m9 0h1m9 0h1m10 0h1m9 0h1m9 0h1m9 0h1m10 0h1m9 0h1m9 0h1m9 0h1m10 0h1m9 0h1m9 0h1m9 0h1m9 0h1m10 0h1m9 0h1m9 0h1m9 0h1m10 0h1m9 0h1m9 0h1m9 0h1m10 0h1m9 0h1m9 0h1m9 0h1m10 0h1m9 0h1m9 0h1m9 0h1m10 0h1m9 0h1m9 0h1m9 0h1m10 0h1m9 0h1m9 0h1m9 0h1m10 0h1m9 0h1m9 0h1m9 0h1m10 0h1m9 0h1m9 0h1m9 0h1m10 0h1m9 0h1m9 0h1m9 0h1m10 0h1m9 0h1m9 0h1m9 0h1m10 0h1m9 0h1m9 0h1M95 383.5h1m10 0h1m9 0h1m9 0h1m9 0h1m9 0h1m10 0h1m9 0h1m9 0h1m9 0h1m10 0h1m9 0h1m9 0h1m9 0h1m10 0h1m9 0h1m9 0h1m9 0h1m10 0h1m9 0h1m9 0h1m9 0h1m10 0h1m9 0h1m9 0h1m9 0h1m10 0h1m9 0h1m9 0h1m9 0h1m10 0h1m9 0h1m9 0h1m9 0h1m10 0h1m9 0h1m9 0h1m9 0h1m10 0h1m9 0h1m9 0h1m9 0h1m10 0h1m9 0h1m9 0h1m9 0h1m10 0h1m9 0h1m9 0h1m9 0h1m10 0h1m9 0h1m9 0h1m9 0h1m10 0h1m9 0h1m9 0h1m9 0h1m9 0h1m10 0h1m9 0h1m9 0h1m9 0h1m10 0h1m9 0h1m9 0h1m9 0h1m10 0h1m9 0h1m9 0h1m9 0h1m10 0h1m9 0h1m9 0h1m9 0h1m10 0h1m9 0h1m9 0h1m9 0h1m10 0h1m9 0h1m9 0h1m9 0h1m10 0h1m9 0h1m9 0h1m9 0h1m10 0h1m9 0h1m9 0h1m9 0h1m10 0h1m9 0h1m9 0h1m9 0h1m10 0h1m9 0h1m9 0h1m9 0h1m10 0h1m9 0h1m9 0h1M95 373.5h1m10 0h1m9 0h1m9 0h1m9 0h1m9 0h1m10 0h1m9 0h1m9 0h1m9 0h1m10 0h1m9 0h1m9 0h1m9 0h1m10 0h1m9 0h1m9 0h1m9 0h1m10 0h1m9 0h1m9 0h1m9 0h1m10 0h1m9 0h1m9 0h1m9 0h1m10 0h1m9 0h1m9 0h1m9 0h1m10 0h1m9 0h1m9 0h1m9 0h1m10 0h1m9 0h1m9 0h1m9 0h1m10 0h1m9 0h1m9 0h1m9 0h1m10 0h1m9 0h1m9 0h1m9 0h1m10 0h1m9 0h1m9 0h1m9 0h1m10 0h1m9 0h1m9 0h1m9 0h1m10 0h1m9 0h1m9 0h1m9 0h1m9 0h1m10 0h1m9 0h1m9 0h1m9 0h1m10 0h1m9 0h1m9 0h1m9 0h1m10 0h1m9 0h1m9 0h1m9 0h1m10 0h1m9 0h1m9 0h1m9 0h1m10 0h1m9 0h1m9 0h1m9 0h1m10 0h1m9 0h1m9 0h1m9 0h1m10 0h1m9 0h1m9 0h1m9 0h1m10 0h1m9 0h1m9 0h1m9 0h1m10 0h1m9 0h1m9 0h1m9 0h1m10 0h1m9 0h1m9 0h1m9 0h1m10 0h1m9 0h1m9 0h1M95 363.5h1m10 0h1m9 0h1m9 0h1m9 0h1m9 0h1m10 0h1m9 0h1m9 0h1m9 0h1m10 0h1m9 0h1m9 0h1m9 0h1m10 0h1m9 0h1m9 0h1m9 0h1m10 0h1m9 0h1m9 0h1m9 0h1m10 0h1m9 0h1m9 0h1m9 0h1m10 0h1m9 0h1m9 0h1m9 0h1m10 0h1m9 0h1m9 0h1m9 0h1m10 0h1m9 0h1m9 0h1m9 0h1m10 0h1m9 0h1m9 0h1m9 0h1m10 0h1m9 0h1m9 0h1m9 0h1m10 0h1m9 0h1m9 0h1m9 0h1m10 0h1m9 0h1m9 0h1m9 0h1m10 0h1m9 0h1m9 0h1m9 0h1m9 0h1m10 0h1m9 0h1m9 0h1m9 0h1m10 0h1m9 0h1m9 0h1m9 0h1m10 0h1m9 0h1m9 0h1m9 0h1m10 0h1m9 0h1m9 0h1m9 0h1m10 0h1m9 0h1m9 0h1m9 0h1m10 0h1m9 0h1m9 0h1m9 0h1m10 0h1m9 0h1m9 0h1m9 0h1m10 0h1m9 0h1m9 0h1m9 0h1m10 0h1m9 0h1m9 0h1m9 0h1m10 0h1m9 0h1m9 0h1m9 0h1m10 0h1m9 0h1m9 0h1M95 353.5h1m10 0h1m9 0h1m9 0h1m9 0h1m9 0h1m10 0h1m9 0h1m9 0h1m9 0h1m10 0h1m9 0h1m9 0h1m9 0h1m10 0h1m9 0h1m9 0h1m9 0h1m10 0h1m9 0h1m9 0h1m9 0h1m10 0h1m9 0h1m9 0h1m9 0h1m10 0h1m9 0h1m9 0h1m9 0h1m10 0h1m9 0h1m9 0h1m9 0h1m10 0h1m9 0h1m9 0h1m9 0h1m10 0h1m9 0h1m9 0h1m9 0h1m10 0h1m9 0h1m9 0h1m9 0h1m10 0h1m9 0h1m9 0h1m9 0h1m10 0h1m9 0h1m9 0h1m9 0h1m10 0h1m9 0h1m9 0h1m9 0h1m9 0h1m10 0h1m9 0h1m9 0h1m9 0h1m10 0h1m9 0h1m9 0h1m9 0h1m10 0h1m9 0h1m9 0h1m9 0h1m10 0h1m9 0h1m9 0h1m9 0h1m10 0h1m9 0h1m9 0h1m9 0h1m10 0h1m9 0h1m9 0h1m9 0h1m10 0h1m9 0h1m9 0h1m9 0h1m10 0h1m9 0h1m9 0h1m9 0h1m10 0h1m9 0h1m9 0h1m9 0h1m10 0h1m9 0h1m9 0h1m9 0h1m10 0h1m9 0h1m9 0h1M95 342.5h1m10 0h1m9 0h1m9 0h1m9 0h1m9 0h1m10 0h1m9 0h1m9 0h1m9 0h1m10 0h1m9 0h1m9 0h1m9 0h1m10 0h1m9 0h1m9 0h1m9 0h1m10 0h1m9 0h1m9 0h1m9 0h1m10 0h1m9 0h1m9 0h1m9 0h1m10 0h1m9 0h1m9 0h1m9 0h1m10 0h1m9 0h1m9 0h1m9 0h1m10 0h1m9 0h1m9 0h1m9 0h1m10 0h1m9 0h1m9 0h1m9 0h1m10 0h1m9 0h1m9 0h1m9 0h1m10 0h1m9 0h1m9 0h1m9 0h1m10 0h1m9 0h1m9 0h1m9 0h1m10 0h1m9 0h1m9 0h1m9 0h1m9 0h1m10 0h1m9 0h1m9 0h1m9 0h1m10 0h1m9 0h1m9 0h1m9 0h1m10 0h1m9 0h1m9 0h1m9 0h1m10 0h1m9 0h1m9 0h1m9 0h1m10 0h1m9 0h1m9 0h1m9 0h1m10 0h1m9 0h1m9 0h1m9 0h1m10 0h1m9 0h1m9 0h1m9 0h1m10 0h1m9 0h1m9 0h1m9 0h1m10 0h1m9 0h1m9 0h1m9 0h1m10 0h1m9 0h1m9 0h1m9 0h1m10 0h1m9 0h1m9 0h1M95 332.5h1m10 0h1m9 0h1m9 0h1m9 0h1m9 0h1m10 0h1m9 0h1m9 0h1m9 0h1m10 0h1m9 0h1m9 0h1m9 0h1m10 0h1m9 0h1m9 0h1m9 0h1m10 0h1m9 0h1m9 0h1m9 0h1m10 0h1m9 0h1m9 0h1m9 0h1m10 0h1m9 0h1m9 0h1m9 0h1m10 0h1m9 0h1m9 0h1m9 0h1m10 0h1m9 0h1m9 0h1m9 0h1m10 0h1m9 0h1m9 0h1m9 0h1m10 0h1m9 0h1m9 0h1m9 0h1m10 0h1m9 0h1m9 0h1m9 0h1m10 0h1m9 0h1m9 0h1m9 0h1m10 0h1m9 0h1m9 0h1m9 0h1m9 0h1m10 0h1m9 0h1m9 0h1m9 0h1m10 0h1m9 0h1m9 0h1m9 0h1m10 0h1m9 0h1m9 0h1m9 0h1m10 0h1m9 0h1m9 0h1m9 0h1m10 0h1m9 0h1m9 0h1m9 0h1m10 0h1m9 0h1m9 0h1m9 0h1m10 0h1m9 0h1m9 0h1m9 0h1m10 0h1m9 0h1m9 0h1m9 0h1m10 0h1m9 0h1m9 0h1m9 0h1m10 0h1m9 0h1m9 0h1m9 0h1m10 0h1m9 0h1m9 0h1M95 322.5h1m10 0h1m9 0h1m9 0h1m9 0h1m9 0h1m10 0h1m9 0h1m9 0h1m9 0h1m10 0h1m9 0h1m9 0h1m9 0h1m10 0h1m9 0h1m9 0h1m9 0h1m10 0h1m9 0h1m9 0h1m9 0h1m10 0h1m9 0h1m9 0h1m9 0h1m10 0h1m9 0h1m9 0h1m9 0h1m10 0h1m9 0h1m9 0h1m9 0h1m10 0h1m9 0h1m9 0h1m9 0h1m10 0h1m9 0h1m9 0h1m9 0h1m10 0h1m9 0h1m9 0h1m9 0h1m10 0h1m9 0h1m9 0h1m9 0h1m10 0h1m9 0h1m9 0h1m9 0h1m10 0h1m9 0h1m9 0h1m9 0h1m9 0h1m10 0h1m9 0h1m9 0h1m9 0h1m10 0h1m9 0h1m9 0h1m9 0h1m10 0h1m9 0h1m9 0h1m9 0h1m10 0h1m9 0h1m9 0h1m9 0h1m10 0h1m9 0h1m9 0h1m9 0h1m10 0h1m9 0h1m9 0h1m9 0h1m10 0h1m9 0h1m9 0h1m9 0h1m10 0h1m9 0h1m9 0h1m9 0h1m10 0h1m9 0h1m9 0h1m9 0h1m10 0h1m9 0h1m9 0h1m9 0h1m10 0h1m9 0h1m9 0h1M95 312.5h1m10 0h1m9 0h1m9 0h1m9 0h1m9 0h1m10 0h1m9 0h1m9 0h1m9 0h1m10 0h1m9 0h1m9 0h1m9 0h1m10 0h1m9 0h1m9 0h1m9 0h1m10 0h1m9 0h1m9 0h1m9 0h1m10 0h1m9 0h1m9 0h1m9 0h1m10 0h1m9 0h1m9 0h1m9 0h1m10 0h1m9 0h1m9 0h1m9 0h1m10 0h1m9 0h1m9 0h1m9 0h1m10 0h1m9 0h1m9 0h1m9 0h1m10 0h1m9 0h1m9 0h1m9 0h1m10 0h1m9 0h1m9 0h1m9 0h1m10 0h1m9 0h1m9 0h1m9 0h1m10 0h1m9 0h1m9 0h1m9 0h1m9 0h1m10 0h1m9 0h1m9 0h1m9 0h1m10 0h1m9 0h1m9 0h1m9 0h1m10 0h1m9 0h1m9 0h1m9 0h1m10 0h1m9 0h1m9 0h1m9 0h1m10 0h1m9 0h1m9 0h1m9 0h1m10 0h1m9 0h1m9 0h1m9 0h1m10 0h1m9 0h1m9 0h1m9 0h1m10 0h1m9 0h1m9 0h1m9 0h1m10 0h1m9 0h1m9 0h1m9 0h1m10 0h1m9 0h1m9 0h1m9 0h1m10 0h1m9 0h1m9 0h1M95 301.5h1m10 0h1m9 0h1m9 0h1m9 0h1m9 0h1m10 0h1m9 0h1m9 0h1m9 0h1m10 0h1m9 0h1m9 0h1m9 0h1m10 0h1m9 0h1m9 0h1m9 0h1m10 0h1m9 0h1m9 0h1m9 0h1m10 0h1m9 0h1m9 0h1m9 0h1m10 0h1m9 0h1m9 0h1m9 0h1m10 0h1m9 0h1m9 0h1m9 0h1m10 0h1m9 0h1m9 0h1m9 0h1m10 0h1m9 0h1m9 0h1m9 0h1m10 0h1m9 0h1m9 0h1m9 0h1m10 0h1m9 0h1m9 0h1m9 0h1m10 0h1m9 0h1m9 0h1m9 0h1m10 0h1m9 0h1m9 0h1m9 0h1m9 0h1m10 0h1m9 0h1m9 0h1m9 0h1m10 0h1m9 0h1m9 0h1m9 0h1m10 0h1m9 0h1m9 0h1m9 0h1m10 0h1m9 0h1m9 0h1m9 0h1m10 0h1m9 0h1m9 0h1m9 0h1m10 0h1m9 0h1m9 0h1m9 0h1m10 0h1m9 0h1m9 0h1m9 0h1m10 0h1m9 0h1m9 0h1m9 0h1m10 0h1m9 0h1m9 0h1m9 0h1m10 0h1m9 0h1m9 0h1m9 0h1m10 0h1m9 0h1m9 0h1M95 291.5h1m10 0h1m9 0h1m9 0h1m9 0h1m9 0h1m10 0h1m9 0h1m9 0h1m9 0h1m10 0h1m9 0h1m9 0h1m9 0h1m10 0h1m9 0h1m9 0h1m9 0h1m10 0h1m9 0h1m9 0h1m9 0h1m10 0h1m9 0h1m9 0h1m9 0h1m10 0h1m9 0h1m9 0h1m9 0h1m10 0h1m9 0h1m9 0h1m9 0h1m10 0h1m9 0h1m9 0h1m9 0h1m10 0h1m9 0h1m9 0h1m9 0h1m10 0h1m9 0h1m9 0h1m9 0h1m10 0h1m9 0h1m9 0h1m9 0h1m10 0h1m9 0h1m9 0h1m9 0h1m10 0h1m9 0h1m9 0h1m9 0h1m9 0h1m10 0h1m9 0h1m9 0h1m9 0h1m10 0h1m9 0h1m9 0h1m9 0h1m10 0h1m9 0h1m9 0h1m9 0h1m10 0h1m9 0h1m9 0h1m9 0h1m10 0h1m9 0h1m9 0h1m9 0h1m10 0h1m9 0h1m9 0h1m9 0h1m10 0h1m9 0h1m9 0h1m9 0h1m10 0h1m9 0h1m9 0h1m9 0h1m10 0h1m9 0h1m9 0h1m9 0h1m10 0h1m9 0h1m9 0h1m9 0h1m10 0h1m9 0h1m9 0h1M95 281.5h1m10 0h1m9 0h1m9 0h1m9 0h1m9 0h1m10 0h1m9 0h1m9 0h1m9 0h1m10 0h1m9 0h1m9 0h1m9 0h1m10 0h1m9 0h1m9 0h1m9 0h1m10 0h1m9 0h1m9 0h1m9 0h1m10 0h1m9 0h1m9 0h1m9 0h1m10 0h1m9 0h1m9 0h1m9 0h1m10 0h1m9 0h1m9 0h1m9 0h1m10 0h1m9 0h1m9 0h1m9 0h1m10 0h1m9 0h1m9 0h1m9 0h1m10 0h1m9 0h1m9 0h1m9 0h1m10 0h1m9 0h1m9 0h1m9 0h1m10 0h1m9 0h1m9 0h1m9 0h1m10 0h1m9 0h1m9 0h1m9 0h1m9 0h1m10 0h1m9 0h1m9 0h1m9 0h1m10 0h1m9 0h1m9 0h1m9 0h1m10 0h1m9 0h1m9 0h1m9 0h1m10 0h1m9 0h1m9 0h1m9 0h1m10 0h1m9 0h1m9 0h1m9 0h1m10 0h1m9 0h1m9 0h1m9 0h1m10 0h1m9 0h1m9 0h1m9 0h1m10 0h1m9 0h1m9 0h1m9 0h1m10 0h1m9 0h1m9 0h1m9 0h1m10 0h1m9 0h1m9 0h1m9 0h1m10 0h1m9 0h1m9 0h1M95 271.5h1m10 0h1m9 0h1m9 0h1m9 0h1m9 0h1m10 0h1m9 0h1m9 0h1m9 0h1m10 0h1m9 0h1m9 0h1m9 0h1m10 0h1m9 0h1m9 0h1m9 0h1m10 0h1m9 0h1m9 0h1m9 0h1m10 0h1m9 0h1m9 0h1m9 0h1m10 0h1m9 0h1m9 0h1m9 0h1m10 0h1m9 0h1m9 0h1m9 0h1m10 0h1m9 0h1m9 0h1m9 0h1m10 0h1m9 0h1m9 0h1m9 0h1m10 0h1m9 0h1m9 0h1m9 0h1m10 0h1m9 0h1m9 0h1m9 0h1m10 0h1m9 0h1m9 0h1m9 0h1m10 0h1m9 0h1m9 0h1m9 0h1m9 0h1m10 0h1m9 0h1m9 0h1m9 0h1m10 0h1m9 0h1m9 0h1m9 0h1m10 0h1m9 0h1m9 0h1m9 0h1m10 0h1m9 0h1m9 0h1m9 0h1m10 0h1m9 0h1m9 0h1m9 0h1m10 0h1m9 0h1m9 0h1m9 0h1m10 0h1m9 0h1m9 0h1m9 0h1m10 0h1m9 0h1m9 0h1m9 0h1m10 0h1m9 0h1m9 0h1m9 0h1m10 0h1m9 0h1m9 0h1m9 0h1m10 0h1m9 0h1m9 0h1M95 260.5h1m10 0h1m9 0h1m9 0h1m9 0h1m9 0h1m10 0h1m9 0h1m9 0h1m9 0h1m10 0h1m9 0h1m9 0h1m9 0h1m10 0h1m9 0h1m9 0h1m9 0h1m10 0h1m9 0h1m9 0h1m9 0h1m10 0h1m9 0h1m9 0h1m9 0h1m10 0h1m9 0h1m9 0h1m9 0h1m10 0h1m9 0h1m9 0h1m9 0h1m10 0h1m9 0h1m9 0h1m9 0h1m10 0h1m9 0h1m9 0h1m9 0h1m10 0h1m9 0h1m9 0h1m9 0h1m10 0h1m9 0h1m9 0h1m9 0h1m10 0h1m9 0h1m9 0h1m9 0h1m10 0h1m9 0h1m9 0h1m9 0h1m9 0h1m10 0h1m9 0h1m9 0h1m9 0h1m10 0h1m9 0h1m9 0h1m9 0h1m10 0h1m9 0h1m9 0h1m9 0h1m10 0h1m9 0h1m9 0h1m9 0h1m10 0h1m9 0h1m9 0h1m9 0h1m10 0h1m9 0h1m9 0h1m9 0h1m10 0h1m9 0h1m9 0h1m9 0h1m10 0h1m9 0h1m9 0h1m9 0h1m10 0h1m9 0h1m9 0h1m9 0h1m10 0h1m9 0h1m9 0h1m9 0h1m10 0h1m9 0h1m9 0h1M95 250.5h1m10 0h1m9 0h1m9 0h1m9 0h1m9 0h1m10 0h1m9 0h1m9 0h1m9 0h1m10 0h1m9 0h1m9 0h1m9 0h1m10 0h1m9 0h1m9 0h1m9 0h1m10 0h1m9 0h1m9 0h1m9 0h1m10 0h1m9 0h1m9 0h1m9 0h1m10 0h1m9 0h1m9 0h1m9 0h1m10 0h1m9 0h1m9 0h1m9 0h1m10 0h1m9 0h1m9 0h1m9 0h1m10 0h1m9 0h1m9 0h1m9 0h1m10 0h1m9 0h1m9 0h1m9 0h1m10 0h1m9 0h1m9 0h1m9 0h1m10 0h1m9 0h1m9 0h1m9 0h1m10 0h1m9 0h1m9 0h1m9 0h1m9 0h1m10 0h1m9 0h1m9 0h1m9 0h1m10 0h1m9 0h1m9 0h1m9 0h1m10 0h1m9 0h1m9 0h1m9 0h1m10 0h1m9 0h1m9 0h1m9 0h1m10 0h1m9 0h1m9 0h1m9 0h1m10 0h1m9 0h1m9 0h1m9 0h1m10 0h1m9 0h1m9 0h1m9 0h1m10 0h1m9 0h1m9 0h1m9 0h1m10 0h1m9 0h1m9 0h1m9 0h1m10 0h1m9 0h1m9 0h1m9 0h1m10 0h1m9 0h1m9 0h1M95 240.5h1m10 0h1m9 0h1m9 0h1m9 0h1m9 0h1m10 0h1m9 0h1m9 0h1m9 0h1m10 0h1m9 0h1m9 0h1m9 0h1m10 0h1m9 0h1m9 0h1m9 0h1m10 0h1m9 0h1m9 0h1m9 0h1m10 0h1m9 0h1m9 0h1m9 0h1m10 0h1m9 0h1m9 0h1m9 0h1m10 0h1m9 0h1m9 0h1m9 0h1m10 0h1m9 0h1m9 0h1m9 0h1m10 0h1m9 0h1m9 0h1m9 0h1m10 0h1m9 0h1m9 0h1m9 0h1m10 0h1m9 0h1m9 0h1m9 0h1m10 0h1m9 0h1m9 0h1m9 0h1m10 0h1m9 0h1m9 0h1m9 0h1m9 0h1m10 0h1m9 0h1m9 0h1m9 0h1m10 0h1m9 0h1m9 0h1m9 0h1m10 0h1m9 0h1m9 0h1m9 0h1m10 0h1m9 0h1m9 0h1m9 0h1m10 0h1m9 0h1m9 0h1m9 0h1m10 0h1m9 0h1m9 0h1m9 0h1m10 0h1m9 0h1m9 0h1m9 0h1m10 0h1m9 0h1m9 0h1m9 0h1m10 0h1m9 0h1m9 0h1m9 0h1m10 0h1m9 0h1m9 0h1m9 0h1m10 0h1m9 0h1m9 0h1M95 230.5h1m10 0h1m9 0h1m9 0h1m9 0h1m9 0h1m10 0h1m9 0h1m9 0h1m9 0h1m10 0h1m9 0h1m9 0h1m9 0h1m10 0h1m9 0h1m9 0h1m9 0h1m10 0h1m9 0h1m9 0h1m9 0h1m10 0h1m9 0h1m9 0h1m9 0h1m10 0h1m9 0h1m9 0h1m9 0h1m10 0h1m9 0h1m9 0h1m9 0h1m10 0h1m9 0h1m9 0h1m9 0h1m10 0h1m9 0h1m9 0h1m9 0h1m10 0h1m9 0h1m9 0h1m9 0h1m10 0h1m9 0h1m9 0h1m9 0h1m10 0h1m9 0h1m9 0h1m9 0h1m10 0h1m9 0h1m9 0h1m9 0h1m9 0h1m10 0h1m9 0h1m9 0h1m9 0h1m10 0h1m9 0h1m9 0h1m9 0h1m10 0h1m9 0h1m9 0h1m9 0h1m10 0h1m9 0h1m9 0h1m9 0h1m10 0h1m9 0h1m9 0h1m9 0h1m10 0h1m9 0h1m9 0h1m9 0h1m10 0h1m9 0h1m9 0h1m9 0h1m10 0h1m9 0h1m9 0h1m9 0h1m10 0h1m9 0h1m9 0h1m9 0h1m10 0h1m9 0h1m9 0h1m9 0h1m10 0h1m9 0h1m9 0h1M95 219.5h1m10 0h1m9 0h1m9 0h1m9 0h1m9 0h1m10 0h1m9 0h1m9 0h1m9 0h1m10 0h1m9 0h1m9 0h1m9 0h1m10 0h1m9 0h1m9 0h1m9 0h1m10 0h1m9 0h1m9 0h1m9 0h1m10 0h1m9 0h1m9 0h1m9 0h1m10 0h1m9 0h1m9 0h1m9 0h1m10 0h1m9 0h1m9 0h1m9 0h1m10 0h1m9 0h1m9 0h1m9 0h1m10 0h1m9 0h1m9 0h1m9 0h1m10 0h1m9 0h1m9 0h1m9 0h1m10 0h1m9 0h1m9 0h1m9 0h1m10 0h1m9 0h1m9 0h1m9 0h1m10 0h1m9 0h1m9 0h1m9 0h1m9 0h1m10 0h1m9 0h1m9 0h1m9 0h1m10 0h1m9 0h1m9 0h1m9 0h1m10 0h1m9 0h1m9 0h1m9 0h1m10 0h1m9 0h1m9 0h1m9 0h1m10 0h1m9 0h1m9 0h1m9 0h1m10 0h1m9 0h1m9 0h1m9 0h1m10 0h1m9 0h1m9 0h1m9 0h1m10 0h1m9 0h1m9 0h1m9 0h1m10 0h1m9 0h1m9 0h1m9 0h1m10 0h1m9 0h1m9 0h1m9 0h1m10 0h1m9 0h1m9 0h1M95 209.5h1m10 0h1m9 0h1m9 0h1m9 0h1m9 0h1m10 0h1m9 0h1m9 0h1m9 0h1m10 0h1m9 0h1m9 0h1m9 0h1m10 0h1m9 0h1m9 0h1m9 0h1m10 0h1m9 0h1m9 0h1m9 0h1m10 0h1m9 0h1m9 0h1m9 0h1m10 0h1m9 0h1m9 0h1m9 0h1m10 0h1m9 0h1m9 0h1m9 0h1m10 0h1m9 0h1m9 0h1m9 0h1m10 0h1m9 0h1m9 0h1m9 0h1m10 0h1m9 0h1m9 0h1m9 0h1m10 0h1m9 0h1m9 0h1m9 0h1m10 0h1m9 0h1m9 0h1m9 0h1m10 0h1m9 0h1m9 0h1m9 0h1m9 0h1m10 0h1m9 0h1m9 0h1m9 0h1m10 0h1m9 0h1m9 0h1m9 0h1m10 0h1m9 0h1m9 0h1m9 0h1m10 0h1m9 0h1m9 0h1m9 0h1m10 0h1m9 0h1m9 0h1m9 0h1m10 0h1m9 0h1m9 0h1m9 0h1m10 0h1m9 0h1m9 0h1m9 0h1m10 0h1m9 0h1m9 0h1m9 0h1m10 0h1m9 0h1m9 0h1m9 0h1m10 0h1m9 0h1m9 0h1m9 0h1m10 0h1m9 0h1m9 0h1M95 199.5h1m10 0h1m9 0h1m9 0h1m9 0h1m9 0h1m10 0h1m9 0h1m9 0h1m9 0h1m10 0h1m9 0h1m9 0h1m9 0h1m10 0h1m9 0h1m9 0h1m9 0h1m10 0h1m9 0h1m9 0h1m9 0h1m10 0h1m9 0h1m9 0h1m9 0h1m10 0h1m9 0h1m9 0h1m9 0h1m10 0h1m9 0h1m9 0h1m9 0h1m10 0h1m9 0h1m9 0h1m9 0h1m10 0h1m9 0h1m9 0h1m9 0h1m10 0h1m9 0h1m9 0h1m9 0h1m10 0h1m9 0h1m9 0h1m9 0h1m10 0h1m9 0h1m9 0h1m9 0h1m10 0h1m9 0h1m9 0h1m9 0h1m9 0h1m10 0h1m9 0h1m9 0h1m9 0h1m10 0h1m9 0h1m9 0h1m9 0h1m10 0h1m9 0h1m9 0h1m9 0h1m10 0h1m9 0h1m9 0h1m9 0h1m10 0h1m9 0h1m9 0h1m9 0h1m10 0h1m9 0h1m9 0h1m9 0h1m10 0h1m9 0h1m9 0h1m9 0h1m10 0h1m9 0h1m9 0h1m9 0h1m10 0h1m9 0h1m9 0h1m9 0h1m10 0h1m9 0h1m9 0h1m9 0h1m10 0h1m9 0h1m9 0h1M95 189.5h1m10 0h1m9 0h1m9 0h1m9 0h1m9 0h1m10 0h1m9 0h1m9 0h1m9 0h1m10 0h1m9 0h1m9 0h1m9 0h1m10 0h1m9 0h1m9 0h1m9 0h1m10 0h1m9 0h1m9 0h1m9 0h1m10 0h1m9 0h1m9 0h1m9 0h1m10 0h1m9 0h1m9 0h1m9 0h1m10 0h1m9 0h1m9 0h1m9 0h1m10 0h1m9 0h1m9 0h1m9 0h1m10 0h1m9 0h1m9 0h1m9 0h1m10 0h1m9 0h1m9 0h1m9 0h1m10 0h1m9 0h1m9 0h1m9 0h1m10 0h1m9 0h1m9 0h1m9 0h1m10 0h1m9 0h1m9 0h1m9 0h1m9 0h1m10 0h1m9 0h1m9 0h1m9 0h1m10 0h1m9 0h1m9 0h1m9 0h1m10 0h1m9 0h1m9 0h1m9 0h1m10 0h1m9 0h1m9 0h1m9 0h1m10 0h1m9 0h1m9 0h1m9 0h1m10 0h1m9 0h1m9 0h1m9 0h1m10 0h1m9 0h1m9 0h1m9 0h1m10 0h1m9 0h1m9 0h1m9 0h1m10 0h1m9 0h1m9 0h1m9 0h1m10 0h1m9 0h1m9 0h1m9 0h1m10 0h1m9 0h1m9 0h1M95 178.5h1m10 0h1m9 0h1m9 0h1m9 0h1m9 0h1m10 0h1m9 0h1m9 0h1m9 0h1m10 0h1m9 0h1m9 0h1m9 0h1m10 0h1m9 0h1m9 0h1m9 0h1m10 0h1m9 0h1m9 0h1m9 0h1m10 0h1m9 0h1m9 0h1m9 0h1m10 0h1m9 0h1m9 0h1m9 0h1m10 0h1m9 0h1m9 0h1m9 0h1m10 0h1m9 0h1m9 0h1m9 0h1m10 0h1m9 0h1m9 0h1m9 0h1m10 0h1m9 0h1m9 0h1m9 0h1m10 0h1m9 0h1m9 0h1m9 0h1m10 0h1m9 0h1m9 0h1m9 0h1m10 0h1m9 0h1m9 0h1m9 0h1m9 0h1m10 0h1m9 0h1m9 0h1m9 0h1m10 0h1m9 0h1m9 0h1m9 0h1m10 0h1m9 0h1m9 0h1m9 0h1m10 0h1m9 0h1m9 0h1m9 0h1m10 0h1m9 0h1m9 0h1m9 0h1m10 0h1m9 0h1m9 0h1m9 0h1m10 0h1m9 0h1m9 0h1m9 0h1m10 0h1m9 0h1m9 0h1m9 0h1m10 0h1m9 0h1m9 0h1m9 0h1m10 0h1m9 0h1m9 0h1m9 0h1m10 0h1m9 0h1m9 0h1M95 168.5h1m10 0h1m9 0h1m9 0h1m9 0h1m9 0h1m10 0h1m9 0h1m9 0h1m9 0h1m10 0h1m9 0h1m9 0h1m9 0h1m10 0h1m9 0h1m9 0h1m9 0h1m10 0h1m9 0h1m9 0h1m9 0h1m10 0h1m9 0h1m9 0h1m9 0h1m10 0h1m9 0h1m9 0h1m9 0h1m10 0h1m9 0h1m9 0h1m9 0h1m10 0h1m9 0h1m9 0h1m9 0h1m10 0h1m9 0h1m9 0h1m9 0h1m10 0h1m9 0h1m9 0h1m9 0h1m10 0h1m9 0h1m9 0h1m9 0h1m10 0h1m9 0h1m9 0h1m9 0h1m10 0h1m9 0h1m9 0h1m9 0h1m9 0h1m10 0h1m9 0h1m9 0h1m9 0h1m10 0h1m9 0h1m9 0h1m9 0h1m10 0h1m9 0h1m9 0h1m9 0h1m10 0h1m9 0h1m9 0h1m9 0h1m10 0h1m9 0h1m9 0h1m9 0h1m10 0h1m9 0h1m9 0h1m9 0h1m10 0h1m9 0h1m9 0h1m9 0h1m10 0h1m9 0h1m9 0h1m9 0h1m10 0h1m9 0h1m9 0h1m9 0h1m10 0h1m9 0h1m9 0h1m9 0h1m10 0h1m9 0h1m9 0h1M95 158.5h1m10 0h1m9 0h1m9 0h1m9 0h1m9 0h1m10 0h1m9 0h1m9 0h1m9 0h1m10 0h1m9 0h1m9 0h1m9 0h1m10 0h1m9 0h1m9 0h1m9 0h1m10 0h1m9 0h1m9 0h1m9 0h1m10 0h1m9 0h1m9 0h1m9 0h1m10 0h1m9 0h1m9 0h1m9 0h1m10 0h1m9 0h1m9 0h1m9 0h1m10 0h1m9 0h1m9 0h1m9 0h1m10 0h1m9 0h1m9 0h1m9 0h1m10 0h1m9 0h1m9 0h1m9 0h1m10 0h1m9 0h1m9 0h1m9 0h1m10 0h1m9 0h1m9 0h1m9 0h1m10 0h1m9 0h1m9 0h1m9 0h1m9 0h1m10 0h1m9 0h1m9 0h1m9 0h1m10 0h1m9 0h1m9 0h1m9 0h1m10 0h1m9 0h1m9 0h1m9 0h1m10 0h1m9 0h1m9 0h1m9 0h1m10 0h1m9 0h1m9 0h1m9 0h1m10 0h1m9 0h1m9 0h1m9 0h1m10 0h1m9 0h1m9 0h1m9 0h1m10 0h1m9 0h1m9 0h1m9 0h1m10 0h1m9 0h1m9 0h1m9 0h1m10 0h1m9 0h1m9 0h1m9 0h1m10 0h1m9 0h1m9 0h1" stroke="#3e3e3e" stroke-width="1" fill="none"/>
<circle cx="146.5" cy="629.7" r="5.5" fill="none" stroke="#c00000" stroke-width="1"/>
<line x1="126.01" y1="629.7" x2="166.99" y2="629.7" stroke="#d00000" stroke-width="1"/>
<line x1="146.5" y1="650.19" x2="146.5" y2="614.33" stroke="#d00000" stroke-width="1"/>
<line x1="187.48" y1="363" x2="402.62" y2="363" stroke="#cc0000" stroke-width="1.9" stroke-dasharray="17.2 6.6 1.6 6.6" stroke-dashoffset="13.03"/>
<line x1="295" y1="312.11" x2="295" y2="414.56" stroke="#cc0000" stroke-width="1.9" stroke-dasharray="17.2 6.6 1.6 6.6" stroke-dashoffset="5.38"/>
<rect x="197.72" y="327.47" width="194.65" height="71.71" rx="35.86" fill="none" stroke="#b2b2b2" stroke-width="1.5" stroke-dasharray="9 2.9 1.1 2.9"/>
<circle cx="233.58" cy="363.33" r="7.6" fill="none" stroke="#ffffff" stroke-width="2.6"/>
<circle cx="356.52" cy="363.33" r="7.6" fill="none" stroke="#ffffff" stroke-width="2.6"/>
<line x1="412.87" y1="363" x2="525.57" y2="363" stroke="#cc0000" stroke-width="1.9" stroke-dasharray="17.2 6.6 1.6 6.6" stroke-dashoffset="0.25"/>
<line x1="469" y1="312.11" x2="469" y2="414.56" stroke="#cc0000" stroke-width="1.9" stroke-dasharray="17.2 6.6 1.6 6.6" stroke-dashoffset="5.38"/>
<circle cx="469.22" cy="363.33" r="38.2" fill="none" stroke="#ffffff" stroke-width="2.6"/>
<line x1="546.05" y1="363" x2="607.52" y2="363" stroke="#cc0000" stroke-width="1.9" stroke-dasharray="17.2 6.6 1.6 6.6" stroke-dashoffset="9.87"/>
<line x1="577" y1="332.6" x2="577" y2="394.07" stroke="#cc0000" stroke-width="1.9" stroke-dasharray="17.2 6.6 1.6 6.6" stroke-dashoffset="9.87"/>
<circle cx="576.79" cy="363.33" r="17.6" fill="none" stroke="#ffffff" stroke-width="2.6"/>
<path d="M255.3 337 L333.9 337 Q342 338 344.2 348.7 L339.5 380 Q338 388 329.5 388.6 L260 388.6 Q251 388 249.5 380 L245.5 348.7 Q247 338 255.3 337 Z" fill="none" stroke="#823e3d" stroke-width="2.7"/>
<line x1="177.24" y1="527" x2="566.54" y2="527" stroke="#cc0000" stroke-width="1.9" stroke-dasharray="17.2 6.6 1.6 6.6" stroke-dashoffset="5.95"/>
<line x1="372" y1="455.54" x2="372" y2="598.97" stroke="#cc0000" stroke-width="1.9" stroke-dasharray="17.2 6.6 1.6 6.6" stroke-dashoffset="0.89"/>
<rect x="196.6" y="472.2" width="351.4" height="109.2" rx="54.6" fill="none" stroke="#b2b2b2" stroke-width="1.5" stroke-dasharray="9 2.9 1.1 2.9"/>
<circle cx="233.58" cy="527.25" r="16.2" fill="none" stroke="#ffffff" stroke-width="2.6"/>
<circle cx="510.2" cy="527.25" r="16.2" fill="none" stroke="#ffffff" stroke-width="2.6"/>
<line x1="287.6" y1="494.6" x2="455.6" y2="494.6" stroke="#b4b4b4" stroke-width="2.6"/>
<path d="M455.6 494.6 L455.6 544.2 L440 544.2 L426.2 559.9 L317 559.9 L304.4 544.2 L287.6 544.2 L287.6 493.3" fill="none" stroke="#fff" stroke-width="2.6"/>
<g fill="none" stroke="#fff" stroke-width="2.3"><circle cx="669" cy="332.6" r="6.95"/><circle cx="699.73" cy="332.6" r="6.95"/><circle cx="730.46" cy="332.6" r="6.95"/><circle cx="761.2" cy="332.6" r="6.95"/><circle cx="791.93" cy="332.6" r="6.95"/><circle cx="822.67" cy="332.6" r="6.95"/><circle cx="853.4" cy="332.6" r="6.95"/><circle cx="884.14" cy="332.6" r="6.95"/><circle cx="914.87" cy="332.6" r="6.95"/><circle cx="945.61" cy="332.6" r="6.95"/><circle cx="976.34" cy="332.6" r="6.95"/><circle cx="1007.08" cy="332.6" r="6.95"/><circle cx="684.36" cy="353.09" r="6.95"/><circle cx="715.1" cy="353.09" r="6.95"/><circle cx="745.83" cy="353.09" r="6.95"/><circle cx="776.57" cy="353.09" r="6.95"/><circle cx="807.3" cy="353.09" r="6.95"/><circle cx="838.04" cy="353.09" r="6.95"/><circle cx="868.77" cy="353.09" r="6.95"/><circle cx="899.51" cy="353.09" r="6.95"/><circle cx="930.24" cy="353.09" r="6.95"/><circle cx="960.98" cy="353.09" r="6.95"/><circle cx="991.71" cy="353.09" r="6.95"/><circle cx="669" cy="373.58" r="6.95"/><circle cx="699.73" cy="373.58" r="6.95"/><circle cx="730.46" cy="373.58" r="6.95"/><circle cx="761.2" cy="373.58" r="6.95"/><circle cx="791.93" cy="373.58" r="6.95"/><circle cx="822.67" cy="373.58" r="6.95"/><circle cx="853.4" cy="373.58" r="6.95"/><circle cx="884.14" cy="373.58" r="6.95"/><circle cx="914.87" cy="373.58" r="6.95"/><circle cx="945.61" cy="373.58" r="6.95"/><circle cx="976.34" cy="373.58" r="6.95"/><circle cx="1007.08" cy="373.58" r="6.95"/><circle cx="684.36" cy="394.07" r="6.95"/><circle cx="715.1" cy="394.07" r="6.95"/><circle cx="745.83" cy="394.07" r="6.95"/><circle cx="776.57" cy="394.07" r="6.95"/><circle cx="807.3" cy="394.07" r="6.95"/><circle cx="838.04" cy="394.07" r="6.95"/><circle cx="868.77" cy="394.07" r="6.95"/><circle cx="899.51" cy="394.07" r="6.95"/><circle cx="930.24" cy="394.07" r="6.95"/><circle cx="960.98" cy="394.07" r="6.95"/><circle cx="991.71" cy="394.07" r="6.95"/><circle cx="669" cy="414.56" r="6.95"/><circle cx="699.73" cy="414.56" r="6.95"/><circle cx="730.46" cy="414.56" r="6.95"/><circle cx="761.2" cy="414.56" r="6.95"/><circle cx="791.93" cy="414.56" r="6.95"/><circle cx="822.67" cy="414.56" r="6.95"/><circle cx="853.4" cy="414.56" r="6.95"/><circle cx="884.14" cy="414.56" r="6.95"/><circle cx="914.87" cy="414.56" r="6.95"/><circle cx="945.61" cy="414.56" r="6.95"/><circle cx="976.34" cy="414.56" r="6.95"/><circle cx="1007.08" cy="414.56" r="6.95"/><circle cx="684.36" cy="435.05" r="6.95"/><circle cx="715.1" cy="435.05" r="6.95"/><circle cx="745.83" cy="435.05" r="6.95"/><circle cx="776.57" cy="435.05" r="6.95"/><circle cx="807.3" cy="435.05" r="6.95"/><circle cx="838.04" cy="435.05" r="6.95"/><circle cx="868.77" cy="435.05" r="6.95"/><circle cx="899.51" cy="435.05" r="6.95"/><circle cx="930.24" cy="435.05" r="6.95"/><circle cx="960.98" cy="435.05" r="6.95"/><circle cx="991.71" cy="435.05" r="6.95"/><circle cx="669" cy="455.54" r="6.95"/><circle cx="699.73" cy="455.54" r="6.95"/><circle cx="730.46" cy="455.54" r="6.95"/><circle cx="761.2" cy="455.54" r="6.95"/><circle cx="791.93" cy="455.54" r="6.95"/><circle cx="822.67" cy="455.54" r="6.95"/><circle cx="684.36" cy="476.03" r="6.95"/><circle cx="715.1" cy="476.03" r="6.95"/><circle cx="745.83" cy="476.03" r="6.95"/><circle cx="776.57" cy="476.03" r="6.95"/><circle cx="807.3" cy="476.03" r="6.95"/><circle cx="669" cy="496.52" r="6.95"/><circle cx="699.73" cy="496.52" r="6.95"/><circle cx="730.46" cy="496.52" r="6.95"/><circle cx="761.2" cy="496.52" r="6.95"/><circle cx="791.93" cy="496.52" r="6.95"/><circle cx="822.67" cy="496.52" r="6.95"/><circle cx="684.36" cy="517.01" r="6.95"/><circle cx="715.1" cy="517.01" r="6.95"/><circle cx="745.83" cy="517.01" r="6.95"/><circle cx="776.57" cy="517.01" r="6.95"/><circle cx="807.3" cy="517.01" r="6.95"/><circle cx="669" cy="537.5" r="6.95"/><circle cx="699.73" cy="537.5" r="6.95"/><circle cx="730.46" cy="537.5" r="6.95"/><circle cx="761.2" cy="537.5" r="6.95"/><circle cx="791.93" cy="537.5" r="6.95"/><circle cx="822.67" cy="537.5" r="6.95"/><circle cx="684.36" cy="557.99" r="6.95"/><circle cx="715.1" cy="557.99" r="6.95"/><circle cx="745.83" cy="557.99" r="6.95"/><circle cx="776.57" cy="557.99" r="6.95"/><circle cx="807.3" cy="557.99" r="6.95"/><circle cx="669" cy="578.48" r="6.95"/><circle cx="699.73" cy="578.48" r="6.95"/><circle cx="730.46" cy="578.48" r="6.95"/><circle cx="761.2" cy="578.48" r="6.95"/><circle cx="791.93" cy="578.48" r="6.95"/><circle cx="822.67" cy="578.48" r="6.95"/></g>
<line x1="845.72" y1="522" x2="1030.13" y2="522" stroke="#cc0000" stroke-width="1.9" stroke-dasharray="17.2 6.6 1.6 6.6" stroke-dashoffset="12.39"/>
<line x1="938" y1="445.29" x2="938" y2="592.82" stroke="#cc0000" stroke-width="1.9" stroke-dasharray="17.2 6.6 1.6 6.6" stroke-dashoffset="16.2"/>
<rect x="858.53" y="465.78" width="158.8" height="112.69" rx="20.49" fill="none" stroke="#823e3d" stroke-width="2.7"/>
<rect x="146.5" y="270.5" width="922" height="359" rx="20.49" fill="none" stroke="#823e3d" stroke-width="2.7"/>
<path d="M146.5 291.62 A20.49 20.49 0 0 1 166.99 271.13" fill="none" stroke="#c65a58" stroke-width="3"/>
<rect x="147.5" y="272.13" width="10" height="10" fill="#0880a8" stroke="#8a9ab8" stroke-width="0.8"/>
<rect x="141.5" y="286.62" width="10" height="10" fill="#0a3fae" stroke="#8a9ab8" stroke-width="0.8"/>
<rect x="161.99" y="266.13" width="10" height="10" fill="#0a3fae" stroke="#8a9ab8" stroke-width="0.8"/>
<circle cx="166.99" cy="291.62" r="5" fill="#0000b4" stroke="#7a7ac8" stroke-width="0.6"/>
<path d="M1068.55 291.62 A20.49 20.49 0 0 0 1048.06 271.13" fill="none" stroke="#c65a58" stroke-width="3"/>
<rect x="1057.55" y="272.13" width="10" height="10" fill="#0880a8" stroke="#8a9ab8" stroke-width="0.8"/>
<rect x="1063.55" y="286.62" width="10" height="10" fill="#c2001e" stroke="#8a9ab8" stroke-width="0.8"/>
<rect x="1043.06" y="266.13" width="10" height="10" fill="#0000b4" stroke="#8a9ab8" stroke-width="0.8"/>
<circle cx="1048.06" cy="291.62" r="5" fill="#0000b4" stroke="#7a7ac8" stroke-width="0.6"/>
<path d="M146.5 609.21 A20.49 20.49 0 0 0 166.99 629.7" fill="none" stroke="#c65a58" stroke-width="3"/>
<rect x="147.5" y="618.7" width="10" height="10" fill="#0880a8" stroke="#8a9ab8" stroke-width="0.8"/>
<rect x="141.5" y="604.21" width="10" height="10" fill="#c2001e" stroke="#8a9ab8" stroke-width="0.8"/>
<rect x="161.99" y="624.7" width="10" height="10" fill="#0a3fae" stroke="#8a9ab8" stroke-width="0.8"/>
<circle cx="166.99" cy="609.21" r="5" fill="#0000b4" stroke="#7a7ac8" stroke-width="0.6"/>
<path d="M1068.55 609.21 A20.49 20.49 0 0 1 1048.06 629.7" fill="none" stroke="#c65a58" stroke-width="3"/>
<rect x="1057.55" y="618.7" width="10" height="10" fill="#0880a8" stroke="#8a9ab8" stroke-width="0.8"/>
<rect x="1063.55" y="604.21" width="10" height="10" fill="#0a3fae" stroke="#8a9ab8" stroke-width="0.8"/>
<rect x="1043.06" y="624.7" width="10" height="10" fill="#c2001e" stroke="#8a9ab8" stroke-width="0.8"/>
<circle cx="1048.06" cy="609.21" r="5" fill="#0000b4" stroke="#7a7ac8" stroke-width="0.6"/>
<path d="M858.53 486.27 A20.49 20.49 0 0 1 879.02 465.78" fill="none" stroke="#c65a58" stroke-width="3"/>
<rect x="859.53" y="466.78" width="10" height="10" fill="#0880a8" stroke="#8a9ab8" stroke-width="0.8"/>
<rect x="853.53" y="481.27" width="10" height="10" fill="#0a3fae" stroke="#8a9ab8" stroke-width="0.8"/>
<rect x="874.02" y="460.78" width="10" height="10" fill="#0a3fae" stroke="#8a9ab8" stroke-width="0.8"/>
<circle cx="879.02" cy="486.27" r="5" fill="#0000b4" stroke="#7a7ac8" stroke-width="0.6"/>
<path d="M1017.32 486.27 A20.49 20.49 0 0 0 996.83 465.78" fill="none" stroke="#c65a58" stroke-width="3"/>
<rect x="1006.32" y="466.78" width="10" height="10" fill="#0880a8" stroke="#8a9ab8" stroke-width="0.8"/>
<rect x="1012.32" y="481.27" width="10" height="10" fill="#0a3fae" stroke="#8a9ab8" stroke-width="0.8"/>
<rect x="991.83" y="460.78" width="10" height="10" fill="#0a3fae" stroke="#8a9ab8" stroke-width="0.8"/>
<circle cx="996.83" cy="486.27" r="5" fill="#0000b4" stroke="#7a7ac8" stroke-width="0.6"/>
<path d="M858.53 557.99 A20.49 20.49 0 0 0 879.02 578.48" fill="none" stroke="#c65a58" stroke-width="3"/>
<rect x="859.53" y="567.47" width="10" height="10" fill="#0880a8" stroke="#8a9ab8" stroke-width="0.8"/>
<rect x="853.53" y="552.99" width="10" height="10" fill="#0a3fae" stroke="#8a9ab8" stroke-width="0.8"/>
<rect x="874.02" y="573.48" width="10" height="10" fill="#0a3fae" stroke="#8a9ab8" stroke-width="0.8"/>
<circle cx="879.02" cy="557.99" r="5" fill="#0000b4" stroke="#7a7ac8" stroke-width="0.6"/>
<path d="M1017.32 557.99 A20.49 20.49 0 0 1 996.83 578.48" fill="none" stroke="#c65a58" stroke-width="3"/>
<rect x="1006.32" y="567.47" width="10" height="10" fill="#0880a8" stroke="#8a9ab8" stroke-width="0.8"/>
<rect x="1012.32" y="552.99" width="10" height="10" fill="#0a3fae" stroke="#8a9ab8" stroke-width="0.8"/>
<rect x="991.83" y="573.48" width="10" height="10" fill="#0a3fae" stroke="#8a9ab8" stroke-width="0.8"/>
<circle cx="996.83" cy="557.99" r="5" fill="#0000b4" stroke="#7a7ac8" stroke-width="0.6"/>
<rect x="241.9" y="334.7" width="10" height="10" fill="#0880a8" stroke="#8a9ab8" stroke-width="0.8"/>
<rect x="337.6" y="334.7" width="10" height="10" fill="#0880a8" stroke="#8a9ab8" stroke-width="0.8"/>
<rect x="246.5" y="383" width="10" height="10" fill="#0880a8" stroke="#8a9ab8" stroke-width="0.8"/>
<rect x="332.5" y="383" width="10" height="10" fill="#0880a8" stroke="#8a9ab8" stroke-width="0.8"/>
<rect x="250.3" y="332" width="10" height="10" fill="#0000b4" stroke="#8a9ab8" stroke-width="0.8"/>
<rect x="240.5" y="343.7" width="10" height="10" fill="#0000b4" stroke="#8a9ab8" stroke-width="0.8"/>
<rect x="328.9" y="332" width="10" height="10" fill="#c2001e" stroke="#8a9ab8" stroke-width="0.8"/>
<rect x="339.2" y="343.7" width="10" height="10" fill="#0000b4" stroke="#8a9ab8" stroke-width="0.8"/>
<rect x="244.5" y="375" width="10" height="10" fill="#c2001e" stroke="#8a9ab8" stroke-width="0.8"/>
<rect x="255" y="383.6" width="10" height="10" fill="#0000b4" stroke="#8a9ab8" stroke-width="0.8"/>
<rect x="334.5" y="375" width="10" height="10" fill="#c2001e" stroke="#8a9ab8" stroke-width="0.8"/>
<rect x="324.5" y="383.6" width="10" height="10" fill="#c2001e" stroke="#8a9ab8" stroke-width="0.8"/>
<circle cx="255.9" cy="347.7" r="5" fill="#0000b4" stroke="#7a7ac8" stroke-width="0.6"/>
<circle cx="333.5" cy="347.7" r="5" fill="#0000b4" stroke="#7a7ac8" stroke-width="0.6"/>
<circle cx="260" cy="378" r="5" fill="#0000b4" stroke="#7a7ac8" stroke-width="0.6"/>
<circle cx="329.5" cy="378" r="5" fill="#0000b4" stroke="#7a7ac8" stroke-width="0.6"/>
<circle cx="387" cy="493.7" r="38.6" fill="none" stroke="#6e7e8c" stroke-width="1.6" opacity="0.75"/>
<circle cx="387" cy="493.7" r="37" fill="none" stroke="#7f8f9c" stroke-width="1.6" opacity="0.8"/>
<circle cx="387" cy="493.7" r="35.3" fill="none" stroke="#5f6e7b" stroke-width="1.8" opacity="0.8"/>
<circle cx="387" cy="493.7" r="33.5" fill="none" stroke="#6a7986" stroke-width="1.6" opacity="0.75"/>
<circle cx="387" cy="493.7" r="31.8" fill="none" stroke="#46535f" stroke-width="1.8" opacity="0.7"/>
<circle cx="387" cy="493.7" r="30.2" fill="none" stroke="#2c353e" stroke-width="1.4" opacity="0.6"/>
<line x1="372" y1="455.54" x2="372" y2="598.97" stroke="#cc0000" stroke-width="1.9" stroke-dasharray="17.2 6.6 1.6 6.6" stroke-dashoffset="0.89"/>
<path d="M386.9 493.7 L386.9 516.6 L392.2 511.8 L396.3 521.6 L400.5 519.8 L396.4 510.2 L403 509.8 Z" fill="#fff" stroke="#fff" stroke-width="3.6" stroke-linejoin="round"/>
<path d="M386.9 493.7 L386.9 516.6 L392.2 511.8 L396.3 521.6 L400.5 519.8 L396.4 510.2 L403 509.8 Z" fill="#fff" stroke="#000" stroke-width="1.5" stroke-linejoin="round"/>
</svg>
<div class="a" style="left:1138px;top:132px;width:16px;height:600px;background:#f9f9f9;border-right:1px solid #e2e2e2"></div>
<div class="a" style="left:1138px;top:132px;width:16px;height:23px;background:#ececec"></div>
<div class="a" style="left:1143px;top:298px;width:8px;height:283px;border-radius:4px;background:#7b7b7b"></div>
<div class="a" style="left:95px;top:732px;width:1004px;height:16px;background:#f9f9f9"></div>
<div class="a" style="left:301px;top:737px;width:604px;height:8px;border-radius:4px;background:#7b7b7b"></div>
<div class="a" style="left:1099px;top:732px;width:55px;height:16px;background:#ececec"></div>
<div class="t" style="right:347px;top:735px;font-size:12.5px;color:#111">1 &lt; 10</div>
<div class="a" style="left:72px;top:748px;width:1082px;height:2px;background:#bebebe"></div>
<div class="a" style="left:72px;top:750px;width:1082px;height:21px;background:#fff;border-bottom:1px solid #c6c6c6"></div>
<div class="t" style="left:77px;top:751.5px;font-size:13.6px;color:#0c0cd0"><i>Opdracht:</i> new</div>
<div class="a" style="left:72px;top:771px;width:1082px;height:27px;background:#ececec"></div>
<div class="t" style="left:73px;top:778.5px;font-size:13.6px;color:#111">Opdracht:</div>
<div class="a" style="left:137px;top:776px;width:990px;height:18px;background:#fff"></div>
<div class="a" style="left:1126px;top:772px;width:27px;height:25px;border:1px solid #a8a8a8;background:linear-gradient(#f6f6f6,#e6e6e6)"></div>
<svg class="a" style="left:1131px;top:777px" width="17" height="15" viewBox="0 0 17 15"><rect x="1.5" y="2.5" width="14" height="11" fill="#fff" stroke="#111"/><rect x="1.5" y="2.5" width="14" height="3" fill="#111"/></svg>
<div class="a" style="left:1154px;top:107px;width:301px;height:691px;background:#fff;border-left:1px solid #cfcfcf"></div>
<div class="a" style="left:1155px;top:108px;width:300px;height:22px;background:linear-gradient(#efefef,#dadada);border-bottom:1px solid #c8c8c8"></div>
<svg class="a" style="left:1157px;top:111px" width="14" height="14" viewBox="0 0 14 14"><circle cx="7" cy="7" r="7" fill="#6d6d6d"/><path d="M4.2 4.2 L9.8 9.8 M9.8 4.2 L4.2 9.8" stroke="#eee" stroke-width="1.8"/></svg>
<svg class="a" style="left:1175px;top:111px" width="14" height="14" viewBox="0 0 14 14"><circle cx="7" cy="7" r="7" fill="#6d6d6d"/><rect x="5.5" y="3.5" width="5" height="4" fill="none" stroke="#eee" stroke-width="1.1"/><rect x="3.5" y="6" width="5" height="4" fill="#6d6d6d" stroke="#eee" stroke-width="1.1"/></svg>
<div class="t" style="left:1297.5px;top:113px;font-size:12px;color:#222">Lagenlijst</div>
<div class="a" style="left:1155px;top:130px;width:300px;height:26px;background:#a8a8a8"></div>
<div class="a" style="left:1156px;top:132px;width:58px;height:23px;background:linear-gradient(#f7f7f7,#e6e6e6)"></div>
<div class="a" style="left:1216px;top:132px;width:58px;height:23px;background:linear-gradient(#f7f7f7,#e6e6e6)"></div>
<div class="a" style="left:1276px;top:132px;width:58px;height:23px;background:linear-gradient(#f7f7f7,#e6e6e6)"></div>
<div class="a" style="left:1336px;top:132px;width:58px;height:23px;background:linear-gradient(#f7f7f7,#e6e6e6)"></div>
<div class="a" style="left:1396px;top:132px;width:58px;height:23px;background:linear-gradient(#f7f7f7,#e6e6e6)"></div>
<svg class="a" style="left:1177px;top:136px" width="16" height="14" viewBox="0 0 16 14"><path d="M0.3 7.3 Q3.5 2 8.5 2 Q13 2 15.7 6.8 Q13 13 8 13 Q3 13 0.3 7.3Z" fill="#000"/><path d="M3 7.8 Q5 4.5 8 4.5 Q11 4.5 13 7.5 Q11 11 8 11 Q5 11 3 7.8Z" fill="#fff"/><circle cx="8" cy="7.8" r="2.6" fill="#000"/><circle cx="7.2" cy="6.8" r=".8" fill="#fff"/></svg>
<svg class="a" style="left:1237px;top:136px" width="16" height="14" viewBox="0 0 16 14"><path d="M0.3 7.3 Q3.5 2 8.5 2 Q13 2 15.7 6.8 Q13 13 8 13 Q3 13 0.3 7.3Z" fill="#a0a0a0"/><path d="M3 7.8 Q5 4.5 8 4.5 Q11 4.5 13 7.5 Q11 11 8 11 Q5 11 3 7.8Z" fill="#fff"/><circle cx="8" cy="7.8" r="2.6" fill="#a0a0a0"/><circle cx="7.2" cy="6.8" r=".8" fill="#fff"/></svg>
<svg class="a" style="left:1297px;top:135px" width="16" height="16" viewBox="0 0 16 16"><path d="M6 1h4v5h5v4h-5v5H6v-5H1V6h5Z" fill="#e00000"/></svg>
<svg class="a" style="left:1357px;top:135px" width="16" height="16" viewBox="0 0 16 16"><rect x="1" y="6.5" width="14" height="3.5" fill="#e00000"/></svg>
<svg class="a" style="left:1417px;top:135px" width="16" height="16" viewBox="0 0 16 16"><path d="M1 15 L2.5 11 L12 1.5 L14.5 4 L5 13.5 Z" fill="#e8b040" stroke="#8a6020" stroke-width=".6"/><path d="M12 1.5 L13.5 0 L16 2.5 L14.5 4Z" fill="#e02020"/><path d="M1 15 L2.5 11 L5 13.5Z" fill="#333"/></svg>
<div class="a" style="left:1161px;top:163px;width:16px;height:9px;background:#000;border:1px solid #000"></div>
<div class="t" style="left:1183px;top:160px;font-size:13.3px;color:#111">0</div>
<svg class="a" style="left:1415px;top:159px" width="16" height="14" viewBox="0 0 16 14"><path d="M0.3 7.3 Q3.5 2 8.5 2 Q13 2 15.7 6.8 Q13 13 8 13 Q3 13 0.3 7.3Z" fill="#000"/><path d="M3 7.8 Q5 4.5 8 4.5 Q11 4.5 13 7.5 Q11 11 8 11 Q5 11 3 7.8Z" fill="#fff"/><circle cx="8" cy="7.8" r="2.6" fill="#000"/><circle cx="7.2" cy="6.8" r=".8" fill="#fff"/></svg>
<svg class="a" style="left:1439px;top:158px" width="12" height="18" viewBox="0 0 12 18"><path d="M3 9 V6 Q3 2 6 2 Q9 2 9 6 V9" fill="none" stroke="#bdbdbd" stroke-width="1.6"/><rect x="1.5" y="9" width="9" height="8" rx="1" fill="#bdbdbd"/></svg>
<div class="a" style="left:1161px;top:183px;width:16px;height:9px;background:#f00000;border:1px solid #000"></div>
<div class="t" style="left:1183px;top:180px;font-size:13.3px;color:#111">Midden</div>
<svg class="a" style="left:1415px;top:179px" width="16" height="14" viewBox="0 0 16 14"><path d="M0.3 7.3 Q3.5 2 8.5 2 Q13 2 15.7 6.8 Q13 13 8 13 Q3 13 0.3 7.3Z" fill="#000"/><path d="M3 7.8 Q5 4.5 8 4.5 Q11 4.5 13 7.5 Q11 11 8 11 Q5 11 3 7.8Z" fill="#fff"/><circle cx="8" cy="7.8" r="2.6" fill="#000"/><circle cx="7.2" cy="6.8" r=".8" fill="#fff"/></svg>
<svg class="a" style="left:1439px;top:178px" width="12" height="18" viewBox="0 0 12 18"><path d="M3 9 V6 Q3 2 6 2 Q9 2 9 6 V9" fill="none" stroke="#bdbdbd" stroke-width="1.6"/><rect x="1.5" y="9" width="9" height="8" rx="1" fill="#bdbdbd"/></svg>
<div class="a" style="left:1161px;top:203px;width:16px;height:9px;background:#a8a8ac;border:1px solid #000"></div>
<div class="t" style="left:1183px;top:200px;font-size:13.3px;color:#111">Terug</div>
<svg class="a" style="left:1415px;top:199px" width="16" height="14" viewBox="0 0 16 14"><path d="M0.3 7.3 Q3.5 2 8.5 2 Q13 2 15.7 6.8 Q13 13 8 13 Q3 13 0.3 7.3Z" fill="#000"/><path d="M3 7.8 Q5 4.5 8 4.5 Q11 4.5 13 7.5 Q11 11 8 11 Q5 11 3 7.8Z" fill="#fff"/><circle cx="8" cy="7.8" r="2.6" fill="#000"/><circle cx="7.2" cy="6.8" r=".8" fill="#fff"/></svg>
<svg class="a" style="left:1439px;top:198px" width="12" height="18" viewBox="0 0 12 18"><path d="M3 9 V6 Q3 2 6 2 Q9 2 9 6 V9" fill="none" stroke="#bdbdbd" stroke-width="1.6"/><rect x="1.5" y="9" width="9" height="8" rx="1" fill="#bdbdbd"/></svg>
<div class="a" style="left:1161px;top:223px;width:16px;height:9px;background:#000;border:1px solid #000"></div>
<div class="t" style="left:1183px;top:220px;font-size:13.3px;color:#111">Ventilatie</div>
<svg class="a" style="left:1415px;top:219px" width="16" height="14" viewBox="0 0 16 14"><path d="M0.3 7.3 Q3.5 2 8.5 2 Q13 2 15.7 6.8 Q13 13 8 13 Q3 13 0.3 7.3Z" fill="#000"/><path d="M3 7.8 Q5 4.5 8 4.5 Q11 4.5 13 7.5 Q11 11 8 11 Q5 11 3 7.8Z" fill="#fff"/><circle cx="8" cy="7.8" r="2.6" fill="#000"/><circle cx="7.2" cy="6.8" r=".8" fill="#fff"/></svg>
<svg class="a" style="left:1439px;top:218px" width="12" height="18" viewBox="0 0 12 18"><path d="M3 9 V6 Q3 2 6 2 Q9 2 9 6 V9" fill="none" stroke="#bdbdbd" stroke-width="1.6"/><rect x="1.5" y="9" width="9" height="8" rx="1" fill="#bdbdbd"/></svg>
<svg class="a" style="left:1392px;top:199px" width="16" height="16" viewBox="0 0 16 16"><path d="M1 15 L2.5 11 L12 1.5 L14.5 4 L5 13.5 Z" fill="#e8b040" stroke="#8a6020" stroke-width=".6"/><path d="M12 1.5 L13.5 0 L16 2.5 L14.5 4Z" fill="#e02020"/><path d="M1 15 L2.5 11 L5 13.5Z" fill="#333"/></svg>
<div class="a" style="left:1455px;top:108px;width:45px;height:690px;background:linear-gradient(90deg,#f0f0f0,#d6d6d6 70%,#c8c8c8)"></div>
<div class="a" style="left:1462px;top:116px;width:26px;height:2px;background:repeating-linear-gradient(90deg,#a8a8a8 0 2px,transparent 2px 6px)"></div>
<div class="a" style="left:1456px;top:120px;width:44px;height:43px;background:#b8b8b8;border-radius:6px"></div>
<div class="a" style="left:1456px;top:417px;width:44px;height:42px;background:#b8b8b8;border-radius:6px"></div>
<div class="a" style="left:1457px;top:261px;width:43px;height:1px;background:repeating-linear-gradient(90deg,#8a8a8a 0 1px,transparent 1px 3px)"></div>
<div class="a" style="left:1457px;top:409px;width:43px;height:1px;background:repeating-linear-gradient(90deg,#8a8a8a 0 1px,transparent 1px 3px)"></div>
<svg class="a" style="left:1463px;top:127px" width="28" height="28" viewBox="0 0 28 28"><rect x=".5" y=".5" width="27" height="27" fill="#fff" stroke="#222"/><rect x=".5" y=".5" width="27" height="4.5" fill="#111"/><rect x="1.5" y="1.5" width="3" height="3" fill="#fff"/><rect x="7" y="11" width="9" height="12" fill="#999" stroke="#555" stroke-width=".6" transform="skewY(-15) translate(0,4)"/><rect x="11" y="9" width="11" height="13" fill="#fff" stroke="#555" stroke-width=".6" transform="skewY(-15) translate(0,4)"/><path d="M15 19 L19 12 L19 19Z" fill="none" stroke="#e02020" stroke-width=".8"/></svg>
<svg class="a" style="left:1463px;top:174px" width="28" height="28" viewBox="0 0 28 28"><rect x=".5" y=".5" width="27" height="27" fill="#fff" stroke="#222"/><rect x=".5" y=".5" width="27" height="4.5" fill="#111"/><rect x="1.5" y="1.5" width="3" height="3" fill="#fff"/><rect x="7" y="10" width="11" height="8" fill="#fff4c0" stroke="#555" stroke-width=".7"/><circle cx="18" cy="18" r="5" fill="#fff4c0" stroke="#555" stroke-width=".7"/></svg>
<svg class="a" style="left:1463px;top:220px" width="28" height="28" viewBox="0 0 28 28"><rect x=".5" y=".5" width="27" height="27" fill="#fff" stroke="#222"/><rect x=".5" y=".5" width="27" height="4.5" fill="#111"/><rect x="1.5" y="1.5" width="3" height="3" fill="#fff"/><rect x="6" y="10" width="16" height="11" rx="2" fill="#f4f4f4" stroke="#b8c8e0" stroke-width=".8"/></svg>
<svg class="a" style="left:1463px;top:276px" width="28" height="28" viewBox="0 0 28 28"><rect x=".5" y=".5" width="27" height="27" fill="#fff" stroke="#222"/><rect x=".5" y=".5" width="27" height="4.5" fill="#111"/><rect x="1.5" y="1.5" width="3" height="3" fill="#fff"/><rect x="5" y="9" width="4" height="3" fill="#111"/><rect x="5" y="15" width="4" height="3" fill="#111"/><rect x="5" y="21" width="4" height="3" fill="#111"/><rect x="11" y="9" width="13" height="3" fill="none" stroke="#333" stroke-width=".6"/><rect x="11" y="15" width="13" height="3" fill="none" stroke="#333" stroke-width=".6"/><rect x="11" y="21" width="13" height="3" fill="none" stroke="#333" stroke-width=".6"/></svg>
<svg class="a" style="left:1463px;top:322px" width="28" height="28" viewBox="0 0 28 28"><rect x=".5" y=".5" width="27" height="27" fill="#fff" stroke="#222"/><rect x=".5" y=".5" width="27" height="4.5" fill="#111"/><rect x="1.5" y="1.5" width="3" height="3" fill="#fff"/><path d="M7 10 Q14 7 21 10 L15 17 V24 L13 22 V17Z" fill="#888" stroke="#333" stroke-width=".6"/></svg>
<svg class="a" style="left:1463px;top:368px" width="28" height="28" viewBox="0 0 28 28"><rect x=".5" y=".5" width="27" height="27" fill="#fff" stroke="#222"/><rect x=".5" y=".5" width="27" height="4.5" fill="#111"/><rect x="1.5" y="1.5" width="3" height="3" fill="#fff"/><path d="M6 9 L11 13 V19 L6 23Z" fill="#fff" stroke="#333" stroke-width=".7"/><rect x="11" y="13" width="11" height="6" rx="1.5" fill="#888"/><path d="M4 16 H24" stroke="#e88" stroke-width=".5"/></svg>
<svg class="a" style="left:1463px;top:424px" width="28" height="28" viewBox="0 0 28 28"><rect x=".5" y=".5" width="27" height="27" fill="#fff" stroke="#222"/><rect x=".5" y=".5" width="27" height="4.5" fill="#111"/><rect x="1.5" y="1.5" width="3" height="3" fill="#fff"/><path d="M3 8h10M3 11h9M3 14h10M3 17h10" stroke="#888" stroke-width=".6"/><rect x=".5" y="22" width="27" height="5.5" fill="#fff" stroke="#222" stroke-width=".8"/><path d="M10 25h12" stroke="#555" stroke-width=".8"/></svg>
<svg class="a" style="left:1463px;top:471px" width="28" height="28" viewBox="0 0 28 28"><rect x=".5" y=".5" width="27" height="27" fill="#fff" stroke="#222"/><rect x=".5" y=".5" width="27" height="4.5" fill="#111"/><rect x="1.5" y="1.5" width="3" height="3" fill="#fff"/><rect x="7" y="9" width="14" height="15" rx="1" fill="#c08838"/><rect x="9" y="11" width="10" height="11" fill="#f0f0f0"/><rect x="11" y="7.5" width="6" height="3" fill="#999"/></svg>
<div class="a" style="left:0;top:798px;width:1500px;height:46px;background:#dcdcdc;border-top:1px solid #cfcfcf"></div>
<div class="t" style="left:2px;top:806.7px;font-size:9.5px;letter-spacing:.36px;color:#111">23.4878,13.2195</div>
<div class="t" style="left:2px;top:826.9px;font-size:9.5px;letter-spacing:.36px;color:#111">@23.4878,13.2195</div>
<div class="a" style="left:254px;top:802px;width:1px;height:40px;background:#777"></div>
<div class="t" style="left:256px;top:806.7px;font-size:9.5px;letter-spacing:.36px;color:#111">26.9524&lt;29.37°</div>
<div class="t" style="left:256px;top:826.9px;font-size:9.5px;letter-spacing:.36px;color:#111">@26.9524&lt;29.37°</div>
<div class="a" style="left:506px;top:818px;width:7px;height:7px;border-radius:50%;background:#c6c6c6"></div>
<div class="a" style="left:939px;top:818px;width:7px;height:7px;border-radius:50%;background:#c6c6c6"></div>
<div class="a" style="left:1268px;top:818px;width:7px;height:7px;border-radius:50%;background:#c6c6c6"></div>
<div class="t" style="right:801.2px;top:811.8px;font-size:9.5px;letter-spacing:.36px;color:#111;text-align:right;line-height:10.8px">Object of gebied selecteren<br>Object of referentiepunt verplaatsen</div>
<svg class="a" style="left:716px;top:805px" width="20" height="32" viewBox="0 0 20 32"><rect x="1.5" y="1" width="17" height="29.5" rx="8.5" fill="#fff" stroke="#333" stroke-width="1"/><path d="M1.5 12.5 Q10 10 18.5 12.5" fill="none" stroke="#333" stroke-width="1"/><rect x="8" y="4" width="4" height="7" rx="2" fill="none" stroke="#333" stroke-width=".9"/><path d="M10 1 V4" stroke="#333" stroke-width=".8"/></svg>
<div class="t" style="left:949.5px;top:811.8px;font-size:9.5px;letter-spacing:.36px;color:#111;line-height:10.8px">Geselecteerde objecten:<br>24 objecten op laag "0".</div>
</body></html>
